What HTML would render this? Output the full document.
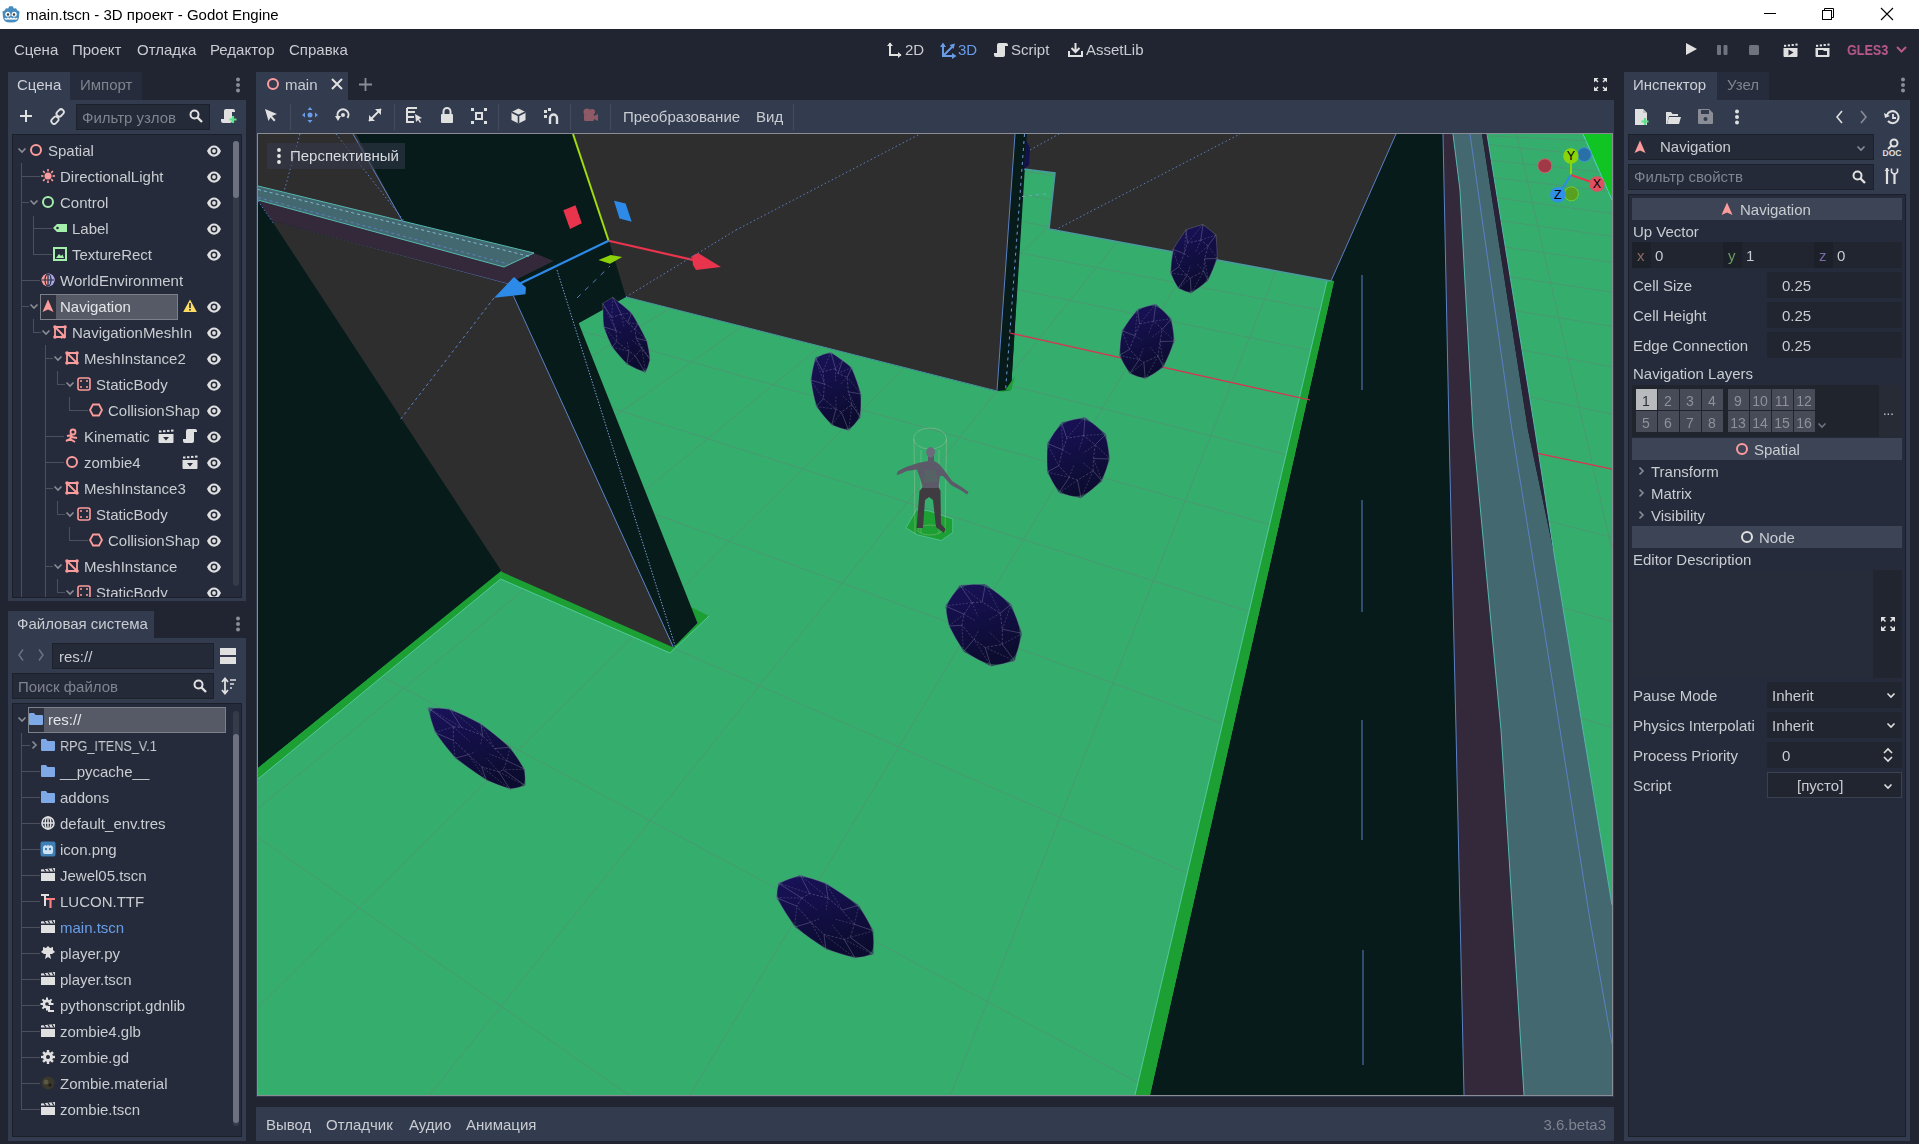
<!DOCTYPE html>
<html><head><meta charset="utf-8">
<style>
*{margin:0;padding:0;box-sizing:border-box}
html,body{width:1920px;height:1144px;overflow:hidden;background:#fff}
body{position:relative;font-family:"Liberation Sans",sans-serif;font-size:15px;color:#c9ccd1}
.a{position:absolute}
.t{position:absolute;white-space:nowrap;-webkit-font-smoothing:antialiased;will-change:transform}
svg{position:absolute;overflow:visible}
</style></head><body>
<div class="a" style="left:0px;top:0px;width:1920px;height:29px;background:#fff;"></div>
<svg style="left:2px;top:5px" width="18" height="18" viewBox="0 0 18 18"><path d="M4 3.2 L6.2 3.6 L7.2 1.2 L10.8 1.2 L11.8 3.6 L14 3.2 L15.2 5.2 L17.5 6.5 L17 12 Q17 17.5 9 17.5 Q1 17.5 1 12 L0.5 6.5 L2.8 5.2Z" fill="#478cbf"/><circle cx="5.8" cy="9.3" r="2.5" fill="#fff"/><circle cx="12.2" cy="9.3" r="2.5" fill="#fff"/><circle cx="6" cy="9.5" r="1.2" fill="#414042"/><circle cx="12" cy="9.5" r="1.2" fill="#414042"/><rect x="8.3" y="9" width="1.4" height="2" fill="#a8cbe8"/><path d="M2.8 13.2 Q4.4 15.2 6 13.2 Q7.5 15.2 9 13.2 Q10.5 15.2 12 13.2 Q13.6 15.2 15.2 13.2" stroke="#fff" stroke-width="1.3" fill="none"/></svg>
<div class="t" style="left:26px;top:2.0px;height:26px;line-height:26px;color:#000;">main.tscn - 3D проект - Godot Engine</div>
<svg style="left:1764px;top:13px" width="12" height="2" viewBox="0 0 12 2"><rect width="12" height="1" fill="#000"/></svg>
<svg style="left:1821px;top:7px" width="14" height="14" viewBox="0 0 14 14"><path d="M3.5 3.5 V1.5 H12.5 V10.5 H10.5" stroke="#000" fill="none"/><rect x="1.5" y="3.5" width="9" height="9" stroke="#000" fill="none"/></svg>
<svg style="left:1880px;top:7px" width="14" height="14" viewBox="0 0 14 14"><path d="M1 1 L13 13 M13 1 L1 13" stroke="#000" stroke-width="1.1"/></svg>
<div class="a" style="left:0px;top:29px;width:1919px;height:1115px;background:#202531;"></div>
<div class="t" style="left:14px;top:37.0px;height:26px;line-height:26px;">Сцена</div>
<div class="t" style="left:72px;top:37.0px;height:26px;line-height:26px;">Проект</div>
<div class="t" style="left:137px;top:37.0px;height:26px;line-height:26px;">Отладка</div>
<div class="t" style="left:210px;top:37.0px;height:26px;line-height:26px;">Редактор</div>
<div class="t" style="left:289px;top:37.0px;height:26px;line-height:26px;">Справка</div>
<svg style="left:887px;top:42px" width="16" height="16" viewBox="0 0 16 16"><path d="M3 1 V13 H14" stroke="#e0e0e0" stroke-width="2" fill="none"/><path d="M0 4 L3 0.5 L6 4Z M11 10 L14.5 13 L11 16Z" fill="#e0e0e0"/></svg>
<div class="t" style="left:905px;top:37.0px;height:26px;line-height:26px;">2D</div>
<svg style="left:940px;top:42px" width="17" height="16" viewBox="0 0 17 16"><path d="M3 4 V14 H13 M3 14 L13 4" stroke="#699ce8" stroke-width="2" fill="none"/><path d="M0 5 L3 0.5 L6 5Z M12 11 L16.5 14 L12 17Z M9.5 3 L15 1.5 L13.5 7Z" fill="#699ce8"/></svg>
<div class="t" style="left:958px;top:37.0px;height:26px;line-height:26px;color:#699ce8;">3D</div>
<svg style="left:994px;top:42px" width="14" height="15" viewBox="0 0 14 15"><path d="M4 1 H12 Q14 1 14 3 V4 H11 V13 Q11 15 9 15 H2 Q0 15 0 13 V11 H3 V3 Q3 1 5 1Z" fill="#e0e0e0"/></svg>
<div class="t" style="left:1011px;top:37.0px;height:26px;line-height:26px;">Script</div>
<svg style="left:1068px;top:42px" width="15" height="15" viewBox="0 0 15 15"><path d="M7.5 1 V10 M3.5 6 L7.5 10 L11.5 6" stroke="#e0e0e0" stroke-width="2" fill="none"/><path d="M1 9 V14 H14 V9" stroke="#e0e0e0" stroke-width="2" fill="none"/></svg>
<div class="t" style="left:1086px;top:37.0px;height:26px;line-height:26px;">AssetLib</div>
<svg style="left:1684px;top:42px" width="14" height="14" viewBox="0 0 14 14"><path d="M2 1 L13 7 L2 13Z" fill="#e0e0e0"/></svg>
<svg style="left:1717px;top:45px" width="12" height="12" viewBox="0 0 12 12"><rect x="0" y="0" width="4" height="10" rx="1" fill="#6f737d"/><rect x="6.5" y="0" width="4" height="10" rx="1" fill="#6f737d"/></svg>
<svg style="left:1749px;top:45px" width="11" height="11" viewBox="0 0 11 11"><rect x="0" y="0" width="10" height="10" rx="1.5" fill="#6f737d"/></svg>
<svg style="left:1783px;top:43px" width="15" height="14" viewBox="0 0 15 14"><path d="M0.5 5 H14.5 V13 Q14.5 14 13.5 14 H1.5 Q0.5 14 0.5 13Z" fill="#e0e0e0"/><rect x="1" y="1.8" width="2.2" height="2" fill="#e0e0e0"/><rect x="4.8" y="1.4" width="2.2" height="2" fill="#e0e0e0"/><rect x="8.6" y="1" width="2.2" height="2" fill="#e0e0e0"/><rect x="12.4" y="0.6" width="2.2" height="2" fill="#e0e0e0"/><path d="M5.5 6.5 L10.5 9.5 L5.5 12.5Z" fill="#202531"/></svg>
<svg style="left:1815px;top:43px" width="15" height="14" viewBox="0 0 15 14"><path d="M0.5 5 H14.5 V13 Q14.5 14 13.5 14 H1.5 Q0.5 14 0.5 13Z" fill="#e0e0e0"/><rect x="1" y="1.8" width="2.2" height="2" fill="#e0e0e0"/><rect x="4.8" y="1.4" width="2.2" height="2" fill="#e0e0e0"/><rect x="8.6" y="1" width="2.2" height="2" fill="#e0e0e0"/><rect x="12.4" y="0.6" width="2.2" height="2" fill="#e0e0e0"/><path d="M3 7 H8 L9 8 H12 V12 H3Z" fill="#202531"/></svg>
<div class="t" style="left:1847px;top:37.0px;height:26px;line-height:26px;color:#b8598a;font-size:14.5px;transform:scaleX(0.867);transform-origin:0 0"><b>GLES3</b></div>
<svg style="left:1896px;top:46px" width="11" height="7" viewBox="0 0 11 7"><path d="M1 1 L5.5 5.5 L10 1" stroke="#b8598a" stroke-width="2" fill="none"/></svg>
<div class="a" style="left:8px;top:72px;width:62px;height:28px;background:#333b4f;"></div>
<div class="t" style="left:17px;top:72.0px;height:26px;line-height:26px;color:#cdd0d5;">Сцена</div>
<div class="a" style="left:70px;top:72px;width:72px;height:28px;background:#262c3b;"></div>
<div class="t" style="left:80px;top:72.0px;height:26px;line-height:26px;color:#80848f;">Импорт</div>
<svg style="left:236px;top:77px" width="4" height="16" viewBox="0 0 4 16"><circle cx="2" cy="2.5" r="2" fill="#8a8d96"/><circle cx="2" cy="8" r="2" fill="#8a8d96"/><circle cx="2" cy="13.5" r="2" fill="#8a8d96"/></svg>
<div class="a" style="left:8px;top:100px;width:238px;height:501px;background:#333b4f;"></div>
<svg style="left:19px;top:109px" width="14" height="14" viewBox="0 0 14 14"><path d="M7 1 V13 M1 7 H13" stroke="#e0e0e0" stroke-width="2"/></svg>
<svg style="left:51px;top:110px" width="13" height="13" viewBox="0 0 13 13"><path d="M5.5 7.5 L7.5 5.5" stroke="#e0e0e0" stroke-width="2"/><rect x="1.2" y="6.2" width="5.5" height="8" rx="2.7" transform="rotate(45 4 10.2)" stroke="#e0e0e0" stroke-width="1.8" fill="none"/><rect x="6.3" y="-1.2" width="5.5" height="8" rx="2.7" transform="rotate(45 9 3)" stroke="#e0e0e0" stroke-width="1.8" fill="none"/></svg>
<div class="a" style="left:76px;top:104px;width:134px;height:26px;background:#252a38;border:1px solid #1d212b"></div>
<div class="t" style="left:82px;top:105.0px;height:26px;line-height:26px;color:#80848f;">Фильтр узлов</div>
<svg style="left:189px;top:109px" width="14" height="14" viewBox="0 0 14 14"><circle cx="5.5" cy="5.5" r="4" stroke="#e0e0e0" stroke-width="2" fill="none"/><path d="M8.5 8.5 L13 13" stroke="#e0e0e0" stroke-width="2.4"/></svg>
<svg style="left:221px;top:108px" width="16" height="16" viewBox="0 0 16 16"><path d="M4 1 H12 Q14 1 14 3 V4 H11 V13 Q11 15 9 15 H2 Q0 15 0 13 V11 H3 V3 Q3 1 5 1Z" fill="#e0e0e0"/><path d="M12 8 V15 M8.5 11.5 H15.5" stroke="#5fe08a" stroke-width="2.2"/></svg>
<div class="a" style="left:12px;top:134px;width:230px;height:464px;background:#252b3a;border:1px solid #1b1f29"></div>
<div class="a" style="left:233px;top:141px;width:6px;height:445px;background:#363b49;border-radius:3px"></div>
<div class="a" style="left:233px;top:141px;width:6px;height:57px;background:#6e7280;border-radius:3px"></div>
<div class="a" style="left:13px;top:135px;width:219px;height:462px;overflow:hidden">
<div class="a" style="left:8px;top:28px;width:1px;height:435px;background:#4b505c;"></div>
<div class="a" style="left:20px;top:81px;width:1px;height:39px;background:#4b505c;"></div>
<div class="a" style="left:20px;top:184px;width:1px;height:14px;background:#4b505c;"></div>
<div class="a" style="left:32px;top:210px;width:1px;height:253px;background:#4b505c;"></div>
<div class="a" style="left:44px;top:236px;width:1px;height:14px;background:#4b505c;"></div>
<div class="a" style="left:56px;top:262px;width:1px;height:14px;background:#4b505c;"></div>
<div class="a" style="left:44px;top:366px;width:1px;height:14px;background:#4b505c;"></div>
<div class="a" style="left:56px;top:392px;width:1px;height:14px;background:#4b505c;"></div>
<div class="a" style="left:44px;top:444px;width:1px;height:14px;background:#4b505c;"></div>
<div class="a" style="left:8px;top:41px;width:19px;height:1px;background:#4b505c;"></div>
<div class="a" style="left:8px;top:67px;width:8px;height:1px;background:#4b505c;"></div>
<div class="a" style="left:20px;top:93px;width:19px;height:1px;background:#4b505c;"></div>
<div class="a" style="left:20px;top:119px;width:19px;height:1px;background:#4b505c;"></div>
<div class="a" style="left:8px;top:145px;width:19px;height:1px;background:#4b505c;"></div>
<div class="a" style="left:8px;top:171px;width:8px;height:1px;background:#4b505c;"></div>
<div class="a" style="left:27px;top:159px;width:138px;height:26px;background:#555a66;border:1px solid #7b808b"></div>
<div class="a" style="left:28px;top:160px;width:15px;height:24px;background:#2b303c;"></div>
<div class="a" style="left:20px;top:197px;width:8px;height:1px;background:#4b505c;"></div>
<div class="a" style="left:32px;top:223px;width:8px;height:1px;background:#4b505c;"></div>
<div class="a" style="left:44px;top:249px;width:8px;height:1px;background:#4b505c;"></div>
<div class="a" style="left:56px;top:275px;width:19px;height:1px;background:#4b505c;"></div>
<div class="a" style="left:32px;top:301px;width:19px;height:1px;background:#4b505c;"></div>
<div class="a" style="left:32px;top:327px;width:19px;height:1px;background:#4b505c;"></div>
<div class="a" style="left:32px;top:353px;width:8px;height:1px;background:#4b505c;"></div>
<div class="a" style="left:44px;top:379px;width:8px;height:1px;background:#4b505c;"></div>
<div class="a" style="left:56px;top:405px;width:19px;height:1px;background:#4b505c;"></div>
<div class="a" style="left:32px;top:431px;width:8px;height:1px;background:#4b505c;"></div>
<div class="a" style="left:44px;top:457px;width:8px;height:1px;background:#4b505c;"></div>
</div>
<div class="a" style="left:13px;top:135px;width:219px;height:462px;overflow:hidden">
<svg style="left:5px;top:12.5px" width="8" height="5" viewBox="0 0 8 5"><path d="M0.5 0.5 L4 4 L7.5 0.5" stroke="#8a8d96" stroke-width="1.6" fill="none"/></svg>
<svg style="left:17px;top:9px" width="12" height="12" viewBox="0 0 12 12"><circle cx="6" cy="6" r="5" stroke="#fc9c9c" stroke-width="2" fill="none"/></svg>
<div class="t" style="left:35px;top:3.0px;height:26px;line-height:26px;">Spatial</div>
<svg style="left:194px;top:10px" width="14" height="12" viewBox="0 0 14 12"><path d="M0 6 C3 -1.5 11 -1.5 14 6 C11 13.5 3 13.5 0 6Z" fill="#e0e0e0"/><circle cx="7" cy="6" r="3.4" fill="#252b3a"/><circle cx="7" cy="6" r="1.9" fill="#e0e0e0"/></svg>
<svg style="left:28px;top:34px" width="14" height="14" viewBox="0 0 14 14"><circle cx="7" cy="7" r="3.5" fill="#fc9c9c"/><rect x="6.2" y="0" width="1.6" height="2.5" fill="#fc9c9c" transform="rotate(0 7 7)"/><rect x="6.2" y="0" width="1.6" height="2.5" fill="#fc9c9c" transform="rotate(45 7 7)"/><rect x="6.2" y="0" width="1.6" height="2.5" fill="#fc9c9c" transform="rotate(90 7 7)"/><rect x="6.2" y="0" width="1.6" height="2.5" fill="#fc9c9c" transform="rotate(135 7 7)"/><rect x="6.2" y="0" width="1.6" height="2.5" fill="#fc9c9c" transform="rotate(180 7 7)"/><rect x="6.2" y="0" width="1.6" height="2.5" fill="#fc9c9c" transform="rotate(225 7 7)"/><rect x="6.2" y="0" width="1.6" height="2.5" fill="#fc9c9c" transform="rotate(270 7 7)"/><rect x="6.2" y="0" width="1.6" height="2.5" fill="#fc9c9c" transform="rotate(315 7 7)"/></svg>
<div class="t" style="left:47px;top:29.0px;height:26px;line-height:26px;">DirectionalLight</div>
<svg style="left:194px;top:36px" width="14" height="12" viewBox="0 0 14 12"><path d="M0 6 C3 -1.5 11 -1.5 14 6 C11 13.5 3 13.5 0 6Z" fill="#e0e0e0"/><circle cx="7" cy="6" r="3.4" fill="#252b3a"/><circle cx="7" cy="6" r="1.9" fill="#e0e0e0"/></svg>
<svg style="left:17px;top:64.5px" width="8" height="5" viewBox="0 0 8 5"><path d="M0.5 0.5 L4 4 L7.5 0.5" stroke="#8a8d96" stroke-width="1.6" fill="none"/></svg>
<svg style="left:29px;top:61px" width="12" height="12" viewBox="0 0 12 12"><circle cx="6" cy="6" r="5" stroke="#a5efac" stroke-width="2" fill="none"/></svg>
<div class="t" style="left:47px;top:55.0px;height:26px;line-height:26px;">Control</div>
<svg style="left:194px;top:62px" width="14" height="12" viewBox="0 0 14 12"><path d="M0 6 C3 -1.5 11 -1.5 14 6 C11 13.5 3 13.5 0 6Z" fill="#e0e0e0"/><circle cx="7" cy="6" r="3.4" fill="#252b3a"/><circle cx="7" cy="6" r="1.9" fill="#e0e0e0"/></svg>
<svg style="left:40px;top:88px" width="14" height="10" viewBox="0 0 14 10"><path d="M0 5 L4 1 H14 V9 H4Z" fill="#a5efac"/><circle cx="4.5" cy="5" r="1.3" fill="#252b3a"/></svg>
<div class="t" style="left:59px;top:81.0px;height:26px;line-height:26px;">Label</div>
<svg style="left:194px;top:88px" width="14" height="12" viewBox="0 0 14 12"><path d="M0 6 C3 -1.5 11 -1.5 14 6 C11 13.5 3 13.5 0 6Z" fill="#e0e0e0"/><circle cx="7" cy="6" r="3.4" fill="#252b3a"/><circle cx="7" cy="6" r="1.9" fill="#e0e0e0"/></svg>
<svg style="left:40px;top:112px" width="14" height="14" viewBox="0 0 14 14"><rect x="1" y="1" width="12" height="12" stroke="#a5efac" stroke-width="2" fill="none"/><path d="M3 11 L6 7 L8 9 L9.5 7.5 L11 11Z" fill="#a5efac"/></svg>
<div class="t" style="left:59px;top:107.0px;height:26px;line-height:26px;">TextureRect</div>
<svg style="left:194px;top:114px" width="14" height="12" viewBox="0 0 14 12"><path d="M0 6 C3 -1.5 11 -1.5 14 6 C11 13.5 3 13.5 0 6Z" fill="#e0e0e0"/><circle cx="7" cy="6" r="3.4" fill="#252b3a"/><circle cx="7" cy="6" r="1.9" fill="#e0e0e0"/></svg>
<svg style="left:28px;top:138px" width="14" height="14" viewBox="0 0 14 14"><circle cx="7" cy="7" r="6.5" fill="#fc9c9c"/><path d="M7 0.5 A6.5 6.5 0 0 1 7 13.5Z" fill="#a8a8f0"/><path d="M7 1 V13 M1 7 H13" stroke="#252b3a" stroke-width="1.2"/><ellipse cx="7" cy="7" rx="3" ry="6" stroke="#252b3a" stroke-width="1.2" fill="none"/></svg>
<div class="t" style="left:47px;top:133.0px;height:26px;line-height:26px;">WorldEnvironment</div>
<svg style="left:17px;top:168.5px" width="8" height="5" viewBox="0 0 8 5"><path d="M0.5 0.5 L4 4 L7.5 0.5" stroke="#8a8d96" stroke-width="1.6" fill="none"/></svg>
<svg style="left:29px;top:164px" width="12" height="14" viewBox="0 0 12 14"><path d="M6 0.5 L11.5 13 L6 10.5 L0.5 13Z" fill="#fc9c9c"/></svg>
<div class="t" style="left:47px;top:159.0px;height:26px;line-height:26px;color:#e4e5e8;">Navigation</div>
<svg style="left:170px;top:164px" width="14" height="14" viewBox="0 0 14 14"><path d="M7 0.5 L13.8 13 H0.2Z" fill="#ffdd65"/><rect x="6.2" y="4" width="1.6" height="5" fill="#252b3a"/><rect x="6.2" y="10" width="1.6" height="1.6" fill="#252b3a"/></svg>
<svg style="left:194px;top:166px" width="14" height="12" viewBox="0 0 14 12"><path d="M0 6 C3 -1.5 11 -1.5 14 6 C11 13.5 3 13.5 0 6Z" fill="#e0e0e0"/><circle cx="7" cy="6" r="3.4" fill="#252b3a"/><circle cx="7" cy="6" r="1.9" fill="#e0e0e0"/></svg>
<svg style="left:29px;top:194.5px" width="8" height="5" viewBox="0 0 8 5"><path d="M0.5 0.5 L4 4 L7.5 0.5" stroke="#8a8d96" stroke-width="1.6" fill="none"/></svg>
<svg style="left:40px;top:190px" width="14" height="14" viewBox="0 0 14 14"><path d="M2 2 H12 V12 H2Z M2 2 L12 12" stroke="#fc9c9c" stroke-width="1.8" fill="none"/><circle cx="2" cy="2" r="1.8" fill="#fc9c9c"/><circle cx="12" cy="2" r="1.8" fill="#fc9c9c"/><circle cx="2" cy="12" r="1.8" fill="#fc9c9c"/><path d="M9 8 L12 14 L10 13 L8 14Z" fill="#fc9c9c"/></svg>
<div class="t" style="left:59px;top:185.0px;height:26px;line-height:26px;">NavigationMeshIn</div>
<svg style="left:194px;top:192px" width="14" height="12" viewBox="0 0 14 12"><path d="M0 6 C3 -1.5 11 -1.5 14 6 C11 13.5 3 13.5 0 6Z" fill="#e0e0e0"/><circle cx="7" cy="6" r="3.4" fill="#252b3a"/><circle cx="7" cy="6" r="1.9" fill="#e0e0e0"/></svg>
<svg style="left:41px;top:220.5px" width="8" height="5" viewBox="0 0 8 5"><path d="M0.5 0.5 L4 4 L7.5 0.5" stroke="#8a8d96" stroke-width="1.6" fill="none"/></svg>
<svg style="left:52px;top:216px" width="14" height="14" viewBox="0 0 14 14"><path d="M2 2 H12 V12 H2Z M2 2 L12 12" stroke="#fc9c9c" stroke-width="1.8" fill="none"/><circle cx="2" cy="2" r="1.8" fill="#fc9c9c"/><circle cx="12" cy="2" r="1.8" fill="#fc9c9c"/><circle cx="2" cy="12" r="1.8" fill="#fc9c9c"/><circle cx="12" cy="12" r="1.8" fill="#fc9c9c"/></svg>
<div class="t" style="left:71px;top:211.0px;height:26px;line-height:26px;">MeshInstance2</div>
<svg style="left:194px;top:218px" width="14" height="12" viewBox="0 0 14 12"><path d="M0 6 C3 -1.5 11 -1.5 14 6 C11 13.5 3 13.5 0 6Z" fill="#e0e0e0"/><circle cx="7" cy="6" r="3.4" fill="#252b3a"/><circle cx="7" cy="6" r="1.9" fill="#e0e0e0"/></svg>
<svg style="left:53px;top:246.5px" width="8" height="5" viewBox="0 0 8 5"><path d="M0.5 0.5 L4 4 L7.5 0.5" stroke="#8a8d96" stroke-width="1.6" fill="none"/></svg>
<svg style="left:64px;top:242px" width="14" height="14" viewBox="0 0 14 14"><rect x="1" y="1" width="12" height="12" rx="2" stroke="#fc9c9c" stroke-width="1.6" fill="none"/><circle cx="4" cy="4" r="1" fill="#fc9c9c"/><circle cx="10" cy="4" r="1" fill="#fc9c9c"/><circle cx="4" cy="10" r="1" fill="#fc9c9c"/><circle cx="10" cy="10" r="1" fill="#fc9c9c"/></svg>
<div class="t" style="left:83px;top:237.0px;height:26px;line-height:26px;">StaticBody</div>
<svg style="left:194px;top:244px" width="14" height="12" viewBox="0 0 14 12"><path d="M0 6 C3 -1.5 11 -1.5 14 6 C11 13.5 3 13.5 0 6Z" fill="#e0e0e0"/><circle cx="7" cy="6" r="3.4" fill="#252b3a"/><circle cx="7" cy="6" r="1.9" fill="#e0e0e0"/></svg>
<svg style="left:76px;top:268px" width="14" height="14" viewBox="0 0 14 14"><path d="M4 1.5 H10 L13 7 L10 12.5 H4 L1 7Z" stroke="#fc9c9c" stroke-width="1.8" fill="none"/></svg>
<div class="t" style="left:95px;top:263.0px;height:26px;line-height:26px;">CollisionShap</div>
<svg style="left:194px;top:270px" width="14" height="12" viewBox="0 0 14 12"><path d="M0 6 C3 -1.5 11 -1.5 14 6 C11 13.5 3 13.5 0 6Z" fill="#e0e0e0"/><circle cx="7" cy="6" r="3.4" fill="#252b3a"/><circle cx="7" cy="6" r="1.9" fill="#e0e0e0"/></svg>
<svg style="left:52px;top:294px" width="14" height="14" viewBox="0 0 14 14"><circle cx="8" cy="3" r="2.5" stroke="#fc9c9c" stroke-width="1.8" fill="none"/><path d="M7 6 L5 10 L1 12 M5 10 L10 13 M6 8 L12 9 M2 7 L7 6" stroke="#fc9c9c" stroke-width="2" fill="none"/></svg>
<div class="t" style="left:71px;top:289.0px;height:26px;line-height:26px;">Kinematic</div>
<svg style="left:145px;top:294px" width="16" height="14" viewBox="0 0 16 14"><path d="M0.5 5 H15.5 V13 Q15.5 14 14.5 14 H1.5 Q0.5 14 0.5 13Z" fill="#e0e0e0"/><rect x="1" y="1.5" width="2.5" height="2" fill="#e0e0e0"/><rect x="5" y="1.2" width="2.5" height="2" fill="#e0e0e0"/><rect x="9" y="0.9" width="2.5" height="2" fill="#e0e0e0"/><rect x="13" y="0.6" width="2.5" height="2" fill="#e0e0e0"/><path d="M5 8 H11 L8 11.5Z" fill="#252b3a"/></svg>
<svg style="left:170px;top:294px" width="14" height="14" viewBox="0 0 14 14"><path d="M4 0 H12 Q14 0 14 2 V3 H11 V12 Q11 14 9 14 H2 Q0 14 0 12 V10 H3 V2 Q3 0 5 0Z" fill="#e0e0e0"/></svg>
<svg style="left:194px;top:296px" width="14" height="12" viewBox="0 0 14 12"><path d="M0 6 C3 -1.5 11 -1.5 14 6 C11 13.5 3 13.5 0 6Z" fill="#e0e0e0"/><circle cx="7" cy="6" r="3.4" fill="#252b3a"/><circle cx="7" cy="6" r="1.9" fill="#e0e0e0"/></svg>
<svg style="left:53px;top:321px" width="12" height="12" viewBox="0 0 12 12"><circle cx="6" cy="6" r="5" stroke="#fc9c9c" stroke-width="2" fill="none"/></svg>
<div class="t" style="left:71px;top:315.0px;height:26px;line-height:26px;">zombie4</div>
<svg style="left:169px;top:320px" width="16" height="14" viewBox="0 0 16 14"><path d="M0.5 5 H15.5 V13 Q15.5 14 14.5 14 H1.5 Q0.5 14 0.5 13Z" fill="#e0e0e0"/><rect x="1" y="1.5" width="2.5" height="2" fill="#e0e0e0"/><rect x="5" y="1.2" width="2.5" height="2" fill="#e0e0e0"/><rect x="9" y="0.9" width="2.5" height="2" fill="#e0e0e0"/><rect x="13" y="0.6" width="2.5" height="2" fill="#e0e0e0"/><path d="M5 8 H11 L8 11.5Z" fill="#252b3a"/></svg>
<svg style="left:194px;top:322px" width="14" height="12" viewBox="0 0 14 12"><path d="M0 6 C3 -1.5 11 -1.5 14 6 C11 13.5 3 13.5 0 6Z" fill="#e0e0e0"/><circle cx="7" cy="6" r="3.4" fill="#252b3a"/><circle cx="7" cy="6" r="1.9" fill="#e0e0e0"/></svg>
<svg style="left:41px;top:350.5px" width="8" height="5" viewBox="0 0 8 5"><path d="M0.5 0.5 L4 4 L7.5 0.5" stroke="#8a8d96" stroke-width="1.6" fill="none"/></svg>
<svg style="left:52px;top:346px" width="14" height="14" viewBox="0 0 14 14"><path d="M2 2 H12 V12 H2Z M2 2 L12 12" stroke="#fc9c9c" stroke-width="1.8" fill="none"/><circle cx="2" cy="2" r="1.8" fill="#fc9c9c"/><circle cx="12" cy="2" r="1.8" fill="#fc9c9c"/><circle cx="2" cy="12" r="1.8" fill="#fc9c9c"/><circle cx="12" cy="12" r="1.8" fill="#fc9c9c"/></svg>
<div class="t" style="left:71px;top:341.0px;height:26px;line-height:26px;">MeshInstance3</div>
<svg style="left:194px;top:348px" width="14" height="12" viewBox="0 0 14 12"><path d="M0 6 C3 -1.5 11 -1.5 14 6 C11 13.5 3 13.5 0 6Z" fill="#e0e0e0"/><circle cx="7" cy="6" r="3.4" fill="#252b3a"/><circle cx="7" cy="6" r="1.9" fill="#e0e0e0"/></svg>
<svg style="left:53px;top:376.5px" width="8" height="5" viewBox="0 0 8 5"><path d="M0.5 0.5 L4 4 L7.5 0.5" stroke="#8a8d96" stroke-width="1.6" fill="none"/></svg>
<svg style="left:64px;top:372px" width="14" height="14" viewBox="0 0 14 14"><rect x="1" y="1" width="12" height="12" rx="2" stroke="#fc9c9c" stroke-width="1.6" fill="none"/><circle cx="4" cy="4" r="1" fill="#fc9c9c"/><circle cx="10" cy="4" r="1" fill="#fc9c9c"/><circle cx="4" cy="10" r="1" fill="#fc9c9c"/><circle cx="10" cy="10" r="1" fill="#fc9c9c"/></svg>
<div class="t" style="left:83px;top:367.0px;height:26px;line-height:26px;">StaticBody</div>
<svg style="left:194px;top:374px" width="14" height="12" viewBox="0 0 14 12"><path d="M0 6 C3 -1.5 11 -1.5 14 6 C11 13.5 3 13.5 0 6Z" fill="#e0e0e0"/><circle cx="7" cy="6" r="3.4" fill="#252b3a"/><circle cx="7" cy="6" r="1.9" fill="#e0e0e0"/></svg>
<svg style="left:76px;top:398px" width="14" height="14" viewBox="0 0 14 14"><path d="M4 1.5 H10 L13 7 L10 12.5 H4 L1 7Z" stroke="#fc9c9c" stroke-width="1.8" fill="none"/></svg>
<div class="t" style="left:95px;top:393.0px;height:26px;line-height:26px;">CollisionShap</div>
<svg style="left:194px;top:400px" width="14" height="12" viewBox="0 0 14 12"><path d="M0 6 C3 -1.5 11 -1.5 14 6 C11 13.5 3 13.5 0 6Z" fill="#e0e0e0"/><circle cx="7" cy="6" r="3.4" fill="#252b3a"/><circle cx="7" cy="6" r="1.9" fill="#e0e0e0"/></svg>
<svg style="left:41px;top:428.5px" width="8" height="5" viewBox="0 0 8 5"><path d="M0.5 0.5 L4 4 L7.5 0.5" stroke="#8a8d96" stroke-width="1.6" fill="none"/></svg>
<svg style="left:52px;top:424px" width="14" height="14" viewBox="0 0 14 14"><path d="M2 2 H12 V12 H2Z M2 2 L12 12" stroke="#fc9c9c" stroke-width="1.8" fill="none"/><circle cx="2" cy="2" r="1.8" fill="#fc9c9c"/><circle cx="12" cy="2" r="1.8" fill="#fc9c9c"/><circle cx="2" cy="12" r="1.8" fill="#fc9c9c"/><circle cx="12" cy="12" r="1.8" fill="#fc9c9c"/></svg>
<div class="t" style="left:71px;top:419.0px;height:26px;line-height:26px;">MeshInstance</div>
<svg style="left:194px;top:426px" width="14" height="12" viewBox="0 0 14 12"><path d="M0 6 C3 -1.5 11 -1.5 14 6 C11 13.5 3 13.5 0 6Z" fill="#e0e0e0"/><circle cx="7" cy="6" r="3.4" fill="#252b3a"/><circle cx="7" cy="6" r="1.9" fill="#e0e0e0"/></svg>
<svg style="left:53px;top:454.5px" width="8" height="5" viewBox="0 0 8 5"><path d="M0.5 0.5 L4 4 L7.5 0.5" stroke="#8a8d96" stroke-width="1.6" fill="none"/></svg>
<svg style="left:64px;top:450px" width="14" height="14" viewBox="0 0 14 14"><rect x="1" y="1" width="12" height="12" rx="2" stroke="#fc9c9c" stroke-width="1.6" fill="none"/><circle cx="4" cy="4" r="1" fill="#fc9c9c"/><circle cx="10" cy="4" r="1" fill="#fc9c9c"/><circle cx="4" cy="10" r="1" fill="#fc9c9c"/><circle cx="10" cy="10" r="1" fill="#fc9c9c"/></svg>
<div class="t" style="left:83px;top:445.0px;height:26px;line-height:26px;">StaticBody</div>
<svg style="left:194px;top:452px" width="14" height="12" viewBox="0 0 14 12"><path d="M0 6 C3 -1.5 11 -1.5 14 6 C11 13.5 3 13.5 0 6Z" fill="#e0e0e0"/><circle cx="7" cy="6" r="3.4" fill="#252b3a"/><circle cx="7" cy="6" r="1.9" fill="#e0e0e0"/></svg>
</div>
<div class="a" style="left:8px;top:611px;width:146px;height:28px;background:#333b4f;"></div>
<div class="t" style="left:17px;top:611.0px;height:26px;line-height:26px;">Файловая система</div>
<svg style="left:236px;top:616px" width="4" height="16" viewBox="0 0 4 16"><circle cx="2" cy="2.5" r="2" fill="#8a8d96"/><circle cx="2" cy="8" r="2" fill="#8a8d96"/><circle cx="2" cy="13.5" r="2" fill="#8a8d96"/></svg>
<div class="a" style="left:8px;top:638px;width:238px;height:503px;background:#333b4f;"></div>
<svg style="left:18px;top:649px" width="6" height="12" viewBox="0 0 6 12"><path d="M5 0.5 L1 6 L5 11.5" stroke="#6e7280" stroke-width="1.5" fill="none"/></svg>
<svg style="left:38px;top:649px" width="6" height="12" viewBox="0 0 6 12"><path d="M1 0.5 L5 6 L1 11.5" stroke="#6e7280" stroke-width="1.5" fill="none"/></svg>
<div class="a" style="left:52px;top:643px;width:162px;height:26px;background:#252a38;border:1px solid #1d212b"></div>
<div class="t" style="left:59px;top:644.0px;height:26px;line-height:26px;">res://</div>
<svg style="left:220px;top:648px" width="16" height="16" viewBox="0 0 16 16"><rect x="0" y="0" width="16" height="7" fill="#e0e0e0"/><rect x="0" y="9" width="16" height="7" fill="#e0e0e0"/></svg>
<div class="a" style="left:12px;top:673px;width:202px;height:26px;background:#252a38;border:1px solid #1d212b"></div>
<div class="t" style="left:18px;top:674.0px;height:26px;line-height:26px;color:#80848f;">Поиск файлов</div>
<svg style="left:193px;top:679px" width="14" height="14" viewBox="0 0 14 14"><circle cx="5.5" cy="5.5" r="4" stroke="#e0e0e0" stroke-width="2" fill="none"/><path d="M8.5 8.5 L13 13" stroke="#e0e0e0" stroke-width="2.4"/></svg>
<svg style="left:221px;top:678px" width="16" height="16" viewBox="0 0 16 16"><path d="M4 1 V15 M1 4 L4 0.5 L7 4 M1 12 L4 15.5 L7 12" stroke="#e0e0e0" stroke-width="1.8" fill="none"/><path d="M9 2 H15 M9 6 H13 M9 10 H11" stroke="#e0e0e0" stroke-width="1.6"/></svg>
<div class="a" style="left:12px;top:703px;width:230px;height:434px;background:#252b3a;border:1px solid #1b1f29"></div>
<div class="a" style="left:233px;top:711px;width:6px;height:415px;background:#363b49;border-radius:3px"></div>
<div class="a" style="left:233px;top:734px;width:6px;height:389px;background:#6e7280;border-radius:3px"></div>
<div class="a" style="left:28px;top:707px;width:198px;height:26px;background:#555a66;border:1px solid #7b808b"></div>
<div class="a" style="left:29px;top:708px;width:15px;height:24px;background:#2b303c;"></div>
<div class="a" style="left:21px;top:733px;width:1px;height:377px;background:#4b505c;"></div>
<svg style="left:18px;top:716.5px" width="8" height="5" viewBox="0 0 8 5"><path d="M0.5 0.5 L4 4 L7.5 0.5" stroke="#8a8d96" stroke-width="1.6" fill="none"/></svg>
<svg style="left:29px;top:713px" width="14" height="12" viewBox="0 0 14 12"><path d="M0 1 Q0 0 1 0 H5 L6.5 2 H13 Q14 2 14 3 V11 Q14 12 13 12 H1 Q0 12 0 11Z" fill="#7fa9e6"/></svg>
<div class="t" style="left:48px;top:707.0px;height:26px;line-height:26px;color:#e4e5e8;">res://</div>
<div class="a" style="left:22px;top:745px;width:8px;height:1px;background:#4b505c;"></div>
<svg style="left:31.5px;top:741px" width="5" height="8" viewBox="0 0 5 8"><path d="M0.5 0.5 L4 4 L0.5 7.5" stroke="#8a8d96" stroke-width="1.6" fill="none"/></svg>
<svg style="left:41px;top:739px" width="14" height="12" viewBox="0 0 14 12"><path d="M0 1 Q0 0 1 0 H5 L6.5 2 H13 Q14 2 14 3 V11 Q14 12 13 12 H1 Q0 12 0 11Z" fill="#7fa9e6"/></svg>
<div class="t" style="left:60px;top:733.0px;height:26px;line-height:26px;transform:scaleX(0.845);transform-origin:0 0">RPG_ITENS_V.1</div>
<div class="a" style="left:22px;top:771px;width:18px;height:1px;background:#4b505c;"></div>
<svg style="left:41px;top:765px" width="14" height="12" viewBox="0 0 14 12"><path d="M0 1 Q0 0 1 0 H5 L6.5 2 H13 Q14 2 14 3 V11 Q14 12 13 12 H1 Q0 12 0 11Z" fill="#7fa9e6"/></svg>
<div class="t" style="left:60px;top:759.0px;height:26px;line-height:26px;">__pycache__</div>
<div class="a" style="left:22px;top:797px;width:18px;height:1px;background:#4b505c;"></div>
<svg style="left:41px;top:791px" width="14" height="12" viewBox="0 0 14 12"><path d="M0 1 Q0 0 1 0 H5 L6.5 2 H13 Q14 2 14 3 V11 Q14 12 13 12 H1 Q0 12 0 11Z" fill="#7fa9e6"/></svg>
<div class="t" style="left:60px;top:785.0px;height:26px;line-height:26px;">addons</div>
<div class="a" style="left:22px;top:823px;width:18px;height:1px;background:#4b505c;"></div>
<svg style="left:41px;top:816px" width="14" height="14" viewBox="0 0 14 14"><circle cx="7" cy="7" r="6" stroke="#e0e0e0" stroke-width="1.6" fill="none"/><path d="M7 1 V13 M1 7 H13" stroke="#e0e0e0" stroke-width="1.4"/><ellipse cx="7" cy="7" rx="2.8" ry="6" stroke="#e0e0e0" stroke-width="1.4" fill="none"/></svg>
<div class="t" style="left:60px;top:811.0px;height:26px;line-height:26px;">default_env.tres</div>
<div class="a" style="left:22px;top:849px;width:18px;height:1px;background:#4b505c;"></div>
<svg style="left:40px;top:841px" width="16" height="16" viewBox="0 0 16 16"><rect x="0.5" y="0.5" width="15" height="15" rx="2" fill="#3e7fb6"/><path d="M3 6 L5 4 L7 5 L8 3.5 L9 5 L11 4 L13 6 V11 Q13 13 11 13 H5 Q3 13 3 11Z" fill="#cfe3f5"/><circle cx="6" cy="8" r="1.2" fill="#3e7fb6"/><circle cx="10" cy="8" r="1.2" fill="#3e7fb6"/></svg>
<div class="t" style="left:60px;top:837.0px;height:26px;line-height:26px;">icon.png</div>
<div class="a" style="left:22px;top:875px;width:18px;height:1px;background:#4b505c;"></div>
<svg style="left:41px;top:868px" width="14" height="14" viewBox="0 0 14 14"><path d="M0 5 H14 V13 H0Z" fill="#e0e0e0"/><path d="M0 1.5 L14 0 V3.5 H0Z" fill="#e0e0e0"/><path d="M3 1.2 L5 3.5 M7 0.8 L9 3.5 M11 0.4 L13 3.5" stroke="#252b3a" stroke-width="1.2"/></svg>
<div class="t" style="left:60px;top:863.0px;height:26px;line-height:26px;">Jewel05.tscn</div>
<div class="a" style="left:22px;top:901px;width:18px;height:1px;background:#4b505c;"></div>
<svg style="left:41px;top:894px" width="14" height="14" viewBox="0 0 14 14"><path d="M0 1 H8 M4 1 V12" stroke="#e0e0e0" stroke-width="2"/><path d="M5 5 H14 M9.5 5 V14" stroke="#fc7f7f" stroke-width="2.2"/></svg>
<div class="t" style="left:60px;top:889.0px;height:26px;line-height:26px;">LUCON.TTF</div>
<div class="a" style="left:22px;top:927px;width:18px;height:1px;background:#4b505c;"></div>
<svg style="left:41px;top:920px" width="14" height="14" viewBox="0 0 14 14"><path d="M0 5 H14 V13 H0Z" fill="#e0e0e0"/><path d="M0 1.5 L14 0 V3.5 H0Z" fill="#e0e0e0"/><path d="M3 1.2 L5 3.5 M7 0.8 L9 3.5 M11 0.4 L13 3.5" stroke="#252b3a" stroke-width="1.2"/></svg>
<div class="t" style="left:60px;top:915.0px;height:26px;line-height:26px;color:#6a9ee8;">main.tscn</div>
<div class="a" style="left:22px;top:953px;width:18px;height:1px;background:#4b505c;"></div>
<svg style="left:41px;top:946px" width="14" height="14" viewBox="0 0 14 14"><path d="M7 0 L9 2 L12 1 L12 4 L14 6 L11 8 L9 8 L10 13 L7 11 L4 13 L5 8 L3 8 L0 6 L2 4 L2 1 L5 2Z" fill="#e0e0e0"/></svg>
<div class="t" style="left:60px;top:941.0px;height:26px;line-height:26px;">player.py</div>
<div class="a" style="left:22px;top:979px;width:18px;height:1px;background:#4b505c;"></div>
<svg style="left:41px;top:972px" width="14" height="14" viewBox="0 0 14 14"><path d="M0 5 H14 V13 H0Z" fill="#e0e0e0"/><path d="M0 1.5 L14 0 V3.5 H0Z" fill="#e0e0e0"/><path d="M3 1.2 L5 3.5 M7 0.8 L9 3.5 M11 0.4 L13 3.5" stroke="#252b3a" stroke-width="1.2"/></svg>
<div class="t" style="left:60px;top:967.0px;height:26px;line-height:26px;">player.tscn</div>
<div class="a" style="left:22px;top:1005px;width:18px;height:1px;background:#4b505c;"></div>
<svg style="left:41px;top:998px" width="14" height="14" viewBox="0 0 14 14"><circle cx="6" cy="6" r="4.5" fill="#e0e0e0"/><rect x="5" y="-0.5" width="2" height="3" fill="#e0e0e0" transform="rotate(0 6 6)"/><rect x="5" y="-0.5" width="2" height="3" fill="#e0e0e0" transform="rotate(45 6 6)"/><rect x="5" y="-0.5" width="2" height="3" fill="#e0e0e0" transform="rotate(90 6 6)"/><rect x="5" y="-0.5" width="2" height="3" fill="#e0e0e0" transform="rotate(135 6 6)"/><rect x="5" y="-0.5" width="2" height="3" fill="#e0e0e0" transform="rotate(180 6 6)"/><rect x="5" y="-0.5" width="2" height="3" fill="#e0e0e0" transform="rotate(225 6 6)"/><rect x="5" y="-0.5" width="2" height="3" fill="#e0e0e0" transform="rotate(270 6 6)"/><rect x="5" y="-0.5" width="2" height="3" fill="#e0e0e0" transform="rotate(315 6 6)"/><circle cx="6" cy="6" r="1.8" fill="#252b3a"/><path d="M7 7 H14 V14 H7Z" fill="#252b3a"/><path d="M8 8 V13 H13" stroke="#e0e0e0" stroke-width="2" fill="none"/></svg>
<div class="t" style="left:60px;top:993.0px;height:26px;line-height:26px;">pythonscript.gdnlib</div>
<div class="a" style="left:22px;top:1031px;width:18px;height:1px;background:#4b505c;"></div>
<svg style="left:41px;top:1024px" width="14" height="14" viewBox="0 0 14 14"><path d="M0 5 H14 V13 H0Z" fill="#e0e0e0"/><path d="M0 1.5 L14 0 V3.5 H0Z" fill="#e0e0e0"/><path d="M3 1.2 L5 3.5 M7 0.8 L9 3.5 M11 0.4 L13 3.5" stroke="#252b3a" stroke-width="1.2"/></svg>
<div class="t" style="left:60px;top:1019.0px;height:26px;line-height:26px;">zombie4.glb</div>
<div class="a" style="left:22px;top:1057px;width:18px;height:1px;background:#4b505c;"></div>
<svg style="left:41px;top:1050px" width="14" height="14" viewBox="0 0 14 14"><circle cx="7" cy="7" r="5" fill="#e0e0e0"/><rect x="5.8" y="0" width="2.4" height="3" fill="#e0e0e0" transform="rotate(0 7 7)"/><rect x="5.8" y="0" width="2.4" height="3" fill="#e0e0e0" transform="rotate(45 7 7)"/><rect x="5.8" y="0" width="2.4" height="3" fill="#e0e0e0" transform="rotate(90 7 7)"/><rect x="5.8" y="0" width="2.4" height="3" fill="#e0e0e0" transform="rotate(135 7 7)"/><rect x="5.8" y="0" width="2.4" height="3" fill="#e0e0e0" transform="rotate(180 7 7)"/><rect x="5.8" y="0" width="2.4" height="3" fill="#e0e0e0" transform="rotate(225 7 7)"/><rect x="5.8" y="0" width="2.4" height="3" fill="#e0e0e0" transform="rotate(270 7 7)"/><rect x="5.8" y="0" width="2.4" height="3" fill="#e0e0e0" transform="rotate(315 7 7)"/><circle cx="7" cy="7" r="2" fill="#252b3a"/></svg>
<div class="t" style="left:60px;top:1045.0px;height:26px;line-height:26px;">zombie.gd</div>
<div class="a" style="left:22px;top:1083px;width:18px;height:1px;background:#4b505c;"></div>
<svg style="left:41px;top:1076px" width="14" height="14" viewBox="0 0 14 14"><circle cx="7" cy="7" r="6.5" fill="#3a372c"/><circle cx="5" cy="6" r="2.5" fill="#5c5846"/><circle cx="9" cy="9" r="1.5" fill="#1c1a14"/></svg>
<div class="t" style="left:60px;top:1071.0px;height:26px;line-height:26px;">Zombie.material</div>
<div class="a" style="left:22px;top:1109px;width:18px;height:1px;background:#4b505c;"></div>
<svg style="left:41px;top:1102px" width="14" height="14" viewBox="0 0 14 14"><path d="M0 5 H14 V13 H0Z" fill="#e0e0e0"/><path d="M0 1.5 L14 0 V3.5 H0Z" fill="#e0e0e0"/><path d="M3 1.2 L5 3.5 M7 0.8 L9 3.5 M11 0.4 L13 3.5" stroke="#252b3a" stroke-width="1.2"/></svg>
<div class="t" style="left:60px;top:1097.0px;height:26px;line-height:26px;">zombie.tscn</div>
<div class="a" style="left:256px;top:72px;width:92px;height:28px;background:#333b4f;"></div>
<svg style="left:267px;top:78px" width="12" height="12" viewBox="0 0 12 12"><circle cx="6" cy="6" r="5" stroke="#fc9c9c" stroke-width="2" fill="none"/></svg>
<div class="t" style="left:285px;top:71.5px;height:26px;line-height:26px;">main</div>
<svg style="left:331px;top:78px" width="12" height="12" viewBox="0 0 12 12"><path d="M1 1 L11 11 M11 1 L1 11" stroke="#e0e0e0" stroke-width="2"/></svg>
<svg style="left:359px;top:78px" width="13" height="13" viewBox="0 0 13 13"><path d="M6.5 0 V13 M0 6.5 H13" stroke="#8a8d96" stroke-width="1.8"/></svg>
<svg style="left:1593px;top:77px" width="15" height="15" viewBox="0 0 15 15"><path d="M1 1 L5.5 1 L1 5.5Z M14 1 L9.5 1 L14 5.5Z M1 14 L5.5 14 L1 9.5Z M14 14 L9.5 14 L14 9.5Z" fill="#e0e0e0"/><path d="M2 2 L5 5 M13 2 L10 5 M2 13 L5 10 M13 13 L10 10" stroke="#e0e0e0" stroke-width="1.6"/></svg>
<div class="a" style="left:256px;top:100px;width:1358px;height:997px;background:#333b4f;"></div>
<svg style="left:264px;top:108px" width="14" height="14" viewBox="0 0 14 14"><path d="M1 1 L13 6 L8 8 L11.5 12 L10 13.5 L6.5 9.5 L4.5 13Z" fill="#e0e0e0"/></svg>
<div class="a" style="left:290px;top:104px;width:1px;height:26px;background:#454c5e;"></div>
<svg style="left:302px;top:107px" width="16" height="16" viewBox="0 0 16 16"><circle cx="8" cy="8" r="2.5" fill="#699ce8"/><path d="M8 0 L10.5 3 H5.5Z M8 16 L10.5 13 H5.5Z M0 8 L3 5.5 V10.5Z M16 8 L13 5.5 V10.5Z" fill="#699ce8"/></svg>
<svg style="left:335px;top:107px" width="16" height="16" viewBox="0 0 16 16"><path d="M3.5 11 A5.5 5.5 0 1 1 12.5 11" stroke="#e0e0e0" stroke-width="2" fill="none"/><path d="M0 9 L6 9 L3 14Z" fill="#e0e0e0"/><circle cx="8" cy="8" r="2" fill="#e0e0e0"/></svg>
<svg style="left:367px;top:107px" width="16" height="16" viewBox="0 0 16 16"><path d="M2 14 L14 2" stroke="#e0e0e0" stroke-width="2"/><path d="M8 2 H14 V8Z M2 8 V14 H8Z" fill="#e0e0e0"/></svg>
<div class="a" style="left:394px;top:104px;width:1px;height:26px;background:#454c5e;"></div>
<svg style="left:406px;top:107px" width="16" height="17" viewBox="0 0 16 17"><path d="M1 1 H11 M1 1 V15 H8 M1 5 H9 M1 10 H8" stroke="#e0e0e0" stroke-width="2" fill="none"/><path d="M9 7 L16 11 L13 12 L15 15 L14 16 L12 13 L10 15Z" fill="#e0e0e0"/></svg>
<svg style="left:440px;top:107px" width="14" height="16" viewBox="0 0 14 16"><path d="M3.5 7 V4.5 A3.5 3.5 0 0 1 10.5 4.5 V7" stroke="#e0e0e0" stroke-width="2" fill="none"/><rect x="1" y="7" width="12" height="9" rx="1" fill="#e0e0e0"/></svg>
<svg style="left:471px;top:108px" width="16" height="16" viewBox="0 0 16 16"><rect x="0" y="0" width="3" height="3" fill="#e0e0e0"/><rect x="13" y="0" width="3" height="3" fill="#e0e0e0"/><rect x="0" y="13" width="3" height="3" fill="#e0e0e0"/><rect x="13" y="13" width="3" height="3" fill="#e0e0e0"/><rect x="4" y="4" width="8" height="8" fill="#e0e0e0"/><rect x="6" y="6" width="4" height="4" fill="#333b4f"/></svg>
<div class="a" style="left:498px;top:104px;width:1px;height:26px;background:#454c5e;"></div>
<svg style="left:511px;top:108px" width="15" height="16" viewBox="0 0 15 16"><path d="M7.5 0.5 L14.5 4 V12 L7.5 15.5 L0.5 12 V4Z" fill="#e0e0e0"/><path d="M0.5 4 L7.5 7.5 L14.5 4 M7.5 7.5 V15.5" stroke="#333b4f" stroke-width="1.6" fill="none"/></svg>
<svg style="left:544px;top:108px" width="16" height="16" viewBox="0 0 16 16"><rect x="0" y="2" width="3" height="3" fill="#e0e0e0"/><rect x="4" y="0" width="3" height="3" fill="#e0e0e0"/><rect x="0" y="7" width="3" height="3" fill="#e0e0e0"/><path d="M6 16 V10 A3.5 3.5 0 0 1 13 10 V16" stroke="#e0e0e0" stroke-width="2.4" fill="none"/></svg>
<div class="a" style="left:570px;top:104px;width:1px;height:26px;background:#454c5e;"></div>
<svg style="left:582px;top:108px" width="16" height="15" viewBox="0 0 16 15"><circle cx="5" cy="4" r="3.5" fill="#8e5a66"/><circle cx="10" cy="4" r="3" fill="#8e5a66"/><rect x="2" y="6" width="10" height="7" rx="1.5" fill="#8e5a66"/><path d="M12 8 L16 6 V13 L12 11Z" fill="#8e5a66"/></svg>
<div class="a" style="left:610px;top:104px;width:1px;height:26px;background:#454c5e;"></div>
<div class="t" style="left:623px;top:104.0px;height:26px;line-height:26px;">Преобразование</div>
<div class="t" style="left:756px;top:104.0px;height:26px;line-height:26px;">Вид</div>
<div class="a" style="left:793px;top:104px;width:1px;height:26px;background:#454c5e;"></div>
<div class="a" style="left:257px;top:133px;width:1356px;height:963px;background:#8b8d96;"></div>
<div class="a" style="left:258px;top:134px;width:1354px;height:961px;overflow:hidden;background:#061b1a">
<svg style="left:0;top:0" width="1354" height="961" viewBox="258 134 1354 961"><defs><linearGradient id="rg" x1="0" y1="0" x2="0.3" y2="1"><stop offset="0" stop-color="#19125a"/><stop offset="1" stop-color="#0c0c30"/></linearGradient></defs><polygon points="258,768 501,572 579,323 626,297 996,391 1011,390 1024,169 1055,173 1049,229 1334,281 1150,1095 258,1095" fill="#35ad6d" /><clipPath id="fc"><polygon points="258,768 501,572 579,323 626,297 996,391 1011,390 1024,169 1055,173 1049,229 1334,281 1150,1095 258,1095" fill="#fff" /></clipPath><g clip-path="url(#fc)"><line x1="712.6" y1="41.4" x2="-1059.2" y2="553.1" stroke="#4a9a70" stroke-width="1" /><line x1="744.6" y1="44.9" x2="-1051.5" y2="596.0" stroke="#4a9a70" stroke-width="1" /><line x1="777.6" y1="48.5" x2="-1042.9" y2="644.2" stroke="#4a9a70" stroke-width="1" /><line x1="811.8" y1="52.2" x2="-1033.1" y2="699.1" stroke="#4a9a70" stroke-width="1" /><line x1="847.2" y1="56.1" x2="-1022.0" y2="761.8" stroke="#4a9a70" stroke-width="1" /><line x1="883.9" y1="60.1" x2="-1009.0" y2="834.5" stroke="#4a9a70" stroke-width="1" /><line x1="921.9" y1="64.3" x2="-993.9" y2="919.4" stroke="#4a9a70" stroke-width="1" /><line x1="961.4" y1="68.6" x2="-975.9" y2="1020.1" stroke="#4a9a70" stroke-width="1" /><line x1="1002.3" y1="73.0" x2="-954.3" y2="1141.3" stroke="#4a9a70" stroke-width="1" /><line x1="1044.9" y1="77.7" x2="-927.7" y2="1290.2" stroke="#4a9a70" stroke-width="1" /><line x1="1089.1" y1="82.5" x2="-894.3" y2="1477.4" stroke="#4a9a70" stroke-width="1" /><line x1="1135.1" y1="87.5" x2="-851.1" y2="1719.8" stroke="#4a9a70" stroke-width="1" /><line x1="1183.0" y1="92.8" x2="-792.9" y2="2046.0" stroke="#4a9a70" stroke-width="1" /><line x1="1233.0" y1="98.2" x2="-710.4" y2="2508.7" stroke="#4a9a70" stroke-width="1" /><line x1="1285.1" y1="103.9" x2="-584.2" y2="3216.1" stroke="#4a9a70" stroke-width="1" /><line x1="1339.4" y1="109.9" x2="-367.3" y2="4432.3" stroke="#4a9a70" stroke-width="1" /><line x1="1396.3" y1="116.1" x2="93.2" y2="7014.2" stroke="#4a9a70" stroke-width="1" /><line x1="1455.7" y1="122.6" x2="1732.9" y2="16207.7" stroke="#4a9a70" stroke-width="1" /><line x1="1517.9" y1="129.4" x2="-11603.6" y2="-58567.7" stroke="#4a9a70" stroke-width="1" /><line x1="1583.2" y1="136.5" x2="-3058.6" y2="-10657.3" stroke="#4a9a70" stroke-width="1" /><line x1="1651.7" y1="144.0" x2="-2215.3" y2="-5929.3" stroke="#4a9a70" stroke-width="1" /><line x1="712.6" y1="41.4" x2="1651.7" y2="144.0" stroke="#4a9a70" stroke-width="1" /><line x1="686.9" y1="48.8" x2="1662.3" y2="160.7" stroke="#4a9a70" stroke-width="1" /><line x1="659.4" y1="56.8" x2="1674.1" y2="179.2" stroke="#4a9a70" stroke-width="1" /><line x1="629.8" y1="65.3" x2="1687.3" y2="200.0" stroke="#4a9a70" stroke-width="1" /><line x1="598.0" y1="74.5" x2="1702.2" y2="223.3" stroke="#4a9a70" stroke-width="1" /><line x1="563.5" y1="84.5" x2="1719.1" y2="249.8" stroke="#4a9a70" stroke-width="1" /><line x1="526.1" y1="95.3" x2="1738.4" y2="280.2" stroke="#4a9a70" stroke-width="1" /><line x1="485.5" y1="107.0" x2="1760.7" y2="315.2" stroke="#4a9a70" stroke-width="1" /><line x1="441.1" y1="119.8" x2="1786.7" y2="356.1" stroke="#4a9a70" stroke-width="1" /><line x1="392.5" y1="133.9" x2="1817.5" y2="404.4" stroke="#4a9a70" stroke-width="1" /><line x1="338.9" y1="149.3" x2="1854.5" y2="462.6" stroke="#4a9a70" stroke-width="1" /><line x1="279.6" y1="166.5" x2="1899.9" y2="533.8" stroke="#4a9a70" stroke-width="1" /><line x1="213.6" y1="185.5" x2="1956.7" y2="623.0" stroke="#4a9a70" stroke-width="1" /><line x1="139.7" y1="206.9" x2="2029.9" y2="738.1" stroke="#4a9a70" stroke-width="1" /><line x1="56.5" y1="230.9" x2="2128.0" y2="892.0" stroke="#4a9a70" stroke-width="1" /><line x1="-38.1" y1="258.2" x2="2266.0" y2="1108.8" stroke="#4a9a70" stroke-width="1" /><line x1="-146.4" y1="289.5" x2="2474.6" y2="1436.4" stroke="#4a9a70" stroke-width="1" /><line x1="-271.6" y1="325.6" x2="2826.6" y2="1989.3" stroke="#4a9a70" stroke-width="1" /><line x1="-418.2" y1="368.0" x2="3547.7" y2="3121.7" stroke="#4a9a70" stroke-width="1" /><line x1="-592.1" y1="418.2" x2="5856.3" y2="6747.5" stroke="#4a9a70" stroke-width="1" /><line x1="-801.7" y1="478.7" x2="-42222.5" y2="-68762.2" stroke="#4a9a70" stroke-width="1" /><line x1="-1059.2" y1="553.1" x2="-2215.3" y2="-5929.3" stroke="#4a9a70" stroke-width="1" /></g><polygon points="258,768 501,571 500.6,579 258,779" fill="#1ca034" /><polygon points="501,571 674,647 670,653 500.6,579" fill="#1ca034" /><polygon points="674,647 697.5,623 691,607 709,616 670,653" fill="#1ca034" /><polyline points="258,779 500.6,579 670,653 709,616" fill="none" stroke="#5fd0b0" stroke-width="0.8" /><polygon points="1327,281 1334,281 1150,1095 1135,1095" fill="#1ca034" /><line x1="1327" y1="281" x2="1135" y2="1095" stroke="#5fd0b0" stroke-width="0.8" /><polygon points="258,134 356,134 403,222 258,186" fill="#2f2e2f" /><polygon points="258,200 504,266 534,253 554,261 508,284 272,221" fill="#34293a" /><polygon points="258,186 534,253 504,267 258,200" fill="#436870" /><polyline points="258,186 534,253 504,267 258,200" fill="none" stroke="#56b8b0" stroke-width="1" /><line x1="258" y1="189.5" x2="530" y2="256.5" stroke="#7fb8d0" stroke-width="1" stroke-dasharray="3 3"/><line x1="258" y1="197.5" x2="508" y2="264" stroke="#5b80c4" stroke-width="1" stroke-dasharray="3 3"/><line x1="258" y1="201" x2="272" y2="221" stroke="#5b80c4" stroke-width="1" stroke-dasharray="1.5 2"/><line x1="272" y1="222" x2="508" y2="284" stroke="#5b80c4" stroke-width="1" /><polygon points="272,221 508,284 673.5,647.5 502,572" fill="#2f2e2f" /><polygon points="508,284 554,261 697.5,623 673.5,647.5" fill="#061b1a" /><line x1="508" y1="284" x2="673.5" y2="647.5" stroke="#5b80c4" stroke-width="1" /><line x1="557" y1="270" x2="675.7" y2="647.7" stroke="#7a9ad0" stroke-width="1" stroke-dasharray="1.5 1.5"/><polygon points="573,134 1015,134 997,391 626,297 609,241" fill="#2f2e2f" /><line x1="626" y1="297" x2="997" y2="391" stroke="#4a9aa0" stroke-width="1" /><polygon points="1015,134 1027,134 1011,390 997,391" fill="#061b1a" /><line x1="1015" y1="134" x2="997" y2="391" stroke="#5b80c4" stroke-width="1" /><line x1="1024.5" y1="134" x2="1005.5" y2="391" stroke="#6a9ad8" stroke-width="1" stroke-dasharray="3 4"/><line x1="1058" y1="137" x2="1055" y2="172" stroke="#5b80c4" stroke-width="1" stroke-dasharray="4 4"/><line x1="1022" y1="196.5" x2="1050" y2="193.6" stroke="#60b0c0" stroke-width="1" stroke-dasharray="3 4"/><polygon points="997,391 1011,390 1015,376 1004,392" fill="#1ca034" /><polygon points="1027,134 1396,134 1331,281 1049,229 1055,173 1024,169" fill="#2f2e2f" /><polyline points="1024,169 1055,173 1049,229 1331,281" fill="none" stroke="#4a9aa0" stroke-width="1.5" /><line x1="1396" y1="134" x2="1331" y2="281" stroke="#5b80c4" stroke-width="1" /><line x1="1055" y1="230" x2="1240" y2="134" stroke="#5b80c4" stroke-width="1" stroke-dasharray="1.5 2.5"/><line x1="1030" y1="150" x2="1059" y2="134" stroke="#5b80c4" stroke-width="1" stroke-dasharray="1.5 2.5"/><polygon points="1443,134 1453,134 1460,190 1473,430 1501,730 1524,1095 1464,1095 1456,730 1449,430" fill="#34293a" /><polygon points="1453,134 1482,134 1528,430 1554,553 1583,730 1612,905 1612,1095 1524,1095 1501,730 1473,430 1460,190" fill="#436870" /><polygon points="1482,134 1487,134 1535,430 1554,553 1528,430" fill="#2a2236" /><polygon points="1487,134 1583,134 1612,200 1612,905 1583,730 1554,553 1535,430" fill="#35ad6d" /><polygon points="1583,134 1612,134 1612,200" fill="#10c424" /><line x1="1583" y1="134" x2="1612" y2="200" stroke="#60d0d0" stroke-width="1" /><polyline points="1443,134 1449,430 1456,730 1464,1095" fill="none" stroke="#5b80c4" stroke-width="1" /><polyline points="1453,134 1460,190 1473,430 1501,730 1524,1095" fill="none" stroke="#56b8b0" stroke-width="1" /><polyline points="1470,134 1512,430 1540,603 1590,920 1612,1044" fill="none" stroke="#5b80c4" stroke-width="1" /><polyline points="1487,134 1535,430 1554,553 1583,730 1612,905" fill="none" stroke="#56b8b0" stroke-width="1" /><line x1="1362" y1="275" x2="1362" y2="390" stroke="#5b80c4" stroke-width="1" /><line x1="1362" y1="500" x2="1362" y2="612" stroke="#5b80c4" stroke-width="1" /><line x1="1362" y1="720" x2="1362" y2="840" stroke="#5b80c4" stroke-width="1" /><line x1="1363" y1="950" x2="1363" y2="1065" stroke="#5b80c4" stroke-width="1" /><clipPath id="rc"><polygon points="1487,134 1583,134 1612,200 1612,905 1583,730 1554,553 1535,430" fill="#fff" /></clipPath><g clip-path="url(#rc)"><line x1="1480" y1="135.4" x2="1612" y2="141.9" stroke="#4a9a70" stroke-width="1" /><line x1="1480" y1="143.6" x2="1612" y2="157.6" stroke="#4a9a70" stroke-width="1" /><line x1="1480" y1="159.0" x2="1612" y2="173.3" stroke="#4a9a70" stroke-width="1" /><line x1="1480" y1="176.0" x2="1612" y2="191.7" stroke="#4a9a70" stroke-width="1" /><line x1="1480" y1="195.5" x2="1612" y2="213.5" stroke="#4a9a70" stroke-width="1" /><line x1="1480" y1="217.8" x2="1612" y2="236.3" stroke="#4a9a70" stroke-width="1" /><line x1="1480" y1="243.4" x2="1612" y2="262.5" stroke="#4a9a70" stroke-width="1" /><line x1="1480" y1="272.3" x2="1612" y2="292.2" stroke="#4a9a70" stroke-width="1" /><line x1="1480" y1="305.2" x2="1612" y2="326.3" stroke="#4a9a70" stroke-width="1" /><line x1="1480" y1="342.3" x2="1612" y2="366.8" stroke="#4a9a70" stroke-width="1" /><line x1="1480" y1="386.8" x2="1612" y2="414.1" stroke="#4a9a70" stroke-width="1" /><line x1="1480" y1="503.8" x2="1612" y2="537.4" stroke="#4a9a70" stroke-width="1" /><line x1="1480" y1="584.8" x2="1612" y2="621.4" stroke="#4a9a70" stroke-width="1" /><line x1="1480" y1="689.5" x2="1612" y2="727.3" stroke="#4a9a70" stroke-width="1" /><line x1="1516.7" y1="134" x2="1611.5" y2="547.8" stroke="#4a9a70" stroke-width="1" /></g><line x1="1538" y1="453.4" x2="1612" y2="469.1" stroke="#e03050" stroke-width="1.2" /><line x1="1010" y1="333" x2="1310" y2="400" stroke="#e03050" stroke-width="1.2" /><polygon points="612.8,297.2 602.7,303.4 603.4,326.9 612,347.2 626.9,364.4 645.6,373 650.3,359.7 647.2,340.9 637.8,323.8 631.6,312.8" fill="url(#rg)" opacity="0.6"/><path d="M622.2 305.0 Q612.8 297.2 607.8 300.3 Q602.7 303.4 603.0 315.1 Q603.4 326.9 607.7 337.0 Q612.0 347.2 619.5 355.8 Q626.9 364.4 636.2 368.7 Q645.6 373.0 648.0 366.4 Q650.3 359.7 648.8 350.3 Q647.2 340.9 642.5 332.4 Q637.8 323.8 634.7 318.3 Q631.6 312.8 622.2 305.0Z" fill="url(#rg)"/><g opacity="0.55"><polyline points="621.2035,314.1785 611.6485,317.58849999999995 616.0335,330.51349999999996 616.7635,341.6785 628.9585,351.13849999999996 635.2435,355.8685 641.8285,348.5535 636.1235,338.21349999999995 634.9535,328.8085 627.5435,322.75849999999997 621.2035,314.1785" fill="none" stroke="#a09ac0" stroke-width="0.6" stroke-dasharray="2.5 1.5"/><line x1="612.8" y1="297.2" x2="621.2035" y2="314.1785" stroke="#a09ac0" stroke-width="0.6" /><line x1="612.8" y1="297.2" x2="611.6485" y2="317.58849999999995" stroke="#a09ac0" stroke-width="0.5" stroke-dasharray="2 1.5"/><line x1="621.2035" y1="314.1785" x2="624.184" y2="327.38399999999996" stroke="#a09ac0" stroke-width="0.5" stroke-dasharray="2 1.5"/><line x1="602.7" y1="303.4" x2="611.6485" y2="317.58849999999995" stroke="#a09ac0" stroke-width="0.6" /><line x1="602.7" y1="303.4" x2="616.0335" y2="330.51349999999996" stroke="#a09ac0" stroke-width="0.5" stroke-dasharray="2 1.5"/><line x1="603.4" y1="326.9" x2="616.0335" y2="330.51349999999996" stroke="#a09ac0" stroke-width="0.6" /><line x1="603.4" y1="326.9" x2="616.7635" y2="341.6785" stroke="#a09ac0" stroke-width="0.5" stroke-dasharray="2 1.5"/><line x1="616.0335" y1="330.51349999999996" x2="622.304" y2="333.32399999999996" stroke="#a09ac0" stroke-width="0.5" stroke-dasharray="2 1.5"/><line x1="612" y1="347.2" x2="616.7635" y2="341.6785" stroke="#a09ac0" stroke-width="0.6" /><line x1="612" y1="347.2" x2="628.9585" y2="351.13849999999996" stroke="#a09ac0" stroke-width="0.5" stroke-dasharray="2 1.5"/><line x1="626.9" y1="364.4" x2="628.9585" y2="351.13849999999996" stroke="#a09ac0" stroke-width="0.6" /><line x1="626.9" y1="364.4" x2="635.2435" y2="355.8685" stroke="#a09ac0" stroke-width="0.5" stroke-dasharray="2 1.5"/><line x1="628.9585" y1="351.13849999999996" x2="627.004" y2="340.82399999999996" stroke="#a09ac0" stroke-width="0.5" stroke-dasharray="2 1.5"/><line x1="645.6" y1="373" x2="635.2435" y2="355.8685" stroke="#a09ac0" stroke-width="0.6" /><line x1="645.6" y1="373" x2="641.8285" y2="348.5535" stroke="#a09ac0" stroke-width="0.5" stroke-dasharray="2 1.5"/><line x1="650.3" y1="359.7" x2="641.8285" y2="348.5535" stroke="#a09ac0" stroke-width="0.6" /><line x1="650.3" y1="359.7" x2="636.1235" y2="338.21349999999995" stroke="#a09ac0" stroke-width="0.5" stroke-dasharray="2 1.5"/><line x1="641.8285" y1="348.5535" x2="631.684" y2="339.88399999999996" stroke="#a09ac0" stroke-width="0.5" stroke-dasharray="2 1.5"/><line x1="647.2" y1="340.9" x2="636.1235" y2="338.21349999999995" stroke="#a09ac0" stroke-width="0.6" /><line x1="647.2" y1="340.9" x2="634.9535" y2="328.8085" stroke="#a09ac0" stroke-width="0.5" stroke-dasharray="2 1.5"/><line x1="637.8" y1="323.8" x2="634.9535" y2="328.8085" stroke="#a09ac0" stroke-width="0.6" /><line x1="637.8" y1="323.8" x2="627.5435" y2="322.75849999999997" stroke="#a09ac0" stroke-width="0.5" stroke-dasharray="2 1.5"/><line x1="634.9535" y1="328.8085" x2="629.184" y2="332.70399999999995" stroke="#a09ac0" stroke-width="0.5" stroke-dasharray="2 1.5"/><line x1="631.6" y1="312.8" x2="627.5435" y2="322.75849999999997" stroke="#a09ac0" stroke-width="0.6" /><line x1="631.6" y1="312.8" x2="621.2035" y2="314.1785" stroke="#a09ac0" stroke-width="0.5" stroke-dasharray="2 1.5"/><polyline points="612.8,297.2 602.7,303.4 603.4,326.9 612,347.2 626.9,364.4 645.6,373 650.3,359.7 647.2,340.9 637.8,323.8 631.6,312.8 612.8,297.2" fill="none" stroke="#8a84a8" stroke-width="0.6" /></g><polygon points="830.8,351.9 815.2,357.3 810.5,380 816,406.6 831.6,425.3 848.75,430.8 860.5,417.5 861.25,394 851.9,367.5 842.5,360.5" fill="url(#rg)" opacity="0.6"/><path d="M836.6 356.2 Q830.8 351.9 823.0 354.6 Q815.2 357.3 812.9 368.6 Q810.5 380.0 813.2 393.3 Q816.0 406.6 823.8 416.0 Q831.6 425.3 840.2 428.1 Q848.8 430.8 854.6 424.1 Q860.5 417.5 860.9 405.8 Q861.2 394.0 856.6 380.8 Q851.9 367.5 847.2 364.0 Q842.5 360.5 836.6 356.2Z" fill="url(#rg)"/><g opacity="0.55"><polyline points="835.545,368.65799999999996 822.965,371.628 824.38,384.113 823.405,398.743 835.985,409.028 841.4175,412.053 851.88,404.738 848.2925,391.813 847.15,377.238 837.98,373.388 835.545,368.65799999999996" fill="none" stroke="#a09ac0" stroke-width="0.6" stroke-dasharray="2.5 1.5"/><line x1="830.8" y1="351.9" x2="835.545" y2="368.65799999999996" stroke="#a09ac0" stroke-width="0.6" /><line x1="830.8" y1="351.9" x2="822.965" y2="371.628" stroke="#a09ac0" stroke-width="0.5" stroke-dasharray="2 1.5"/><line x1="835.545" y1="368.65799999999996" x2="835.68" y2="381.692" stroke="#a09ac0" stroke-width="0.5" stroke-dasharray="2 1.5"/><line x1="815.2" y1="357.3" x2="822.965" y2="371.628" stroke="#a09ac0" stroke-width="0.6" /><line x1="815.2" y1="357.3" x2="824.38" y2="384.113" stroke="#a09ac0" stroke-width="0.5" stroke-dasharray="2 1.5"/><line x1="810.5" y1="380" x2="824.38" y2="384.113" stroke="#a09ac0" stroke-width="0.6" /><line x1="810.5" y1="380" x2="823.405" y2="398.743" stroke="#a09ac0" stroke-width="0.5" stroke-dasharray="2 1.5"/><line x1="824.38" y1="384.113" x2="831.62" y2="387.312" stroke="#a09ac0" stroke-width="0.5" stroke-dasharray="2 1.5"/><line x1="816" y1="406.6" x2="823.405" y2="398.743" stroke="#a09ac0" stroke-width="0.6" /><line x1="816" y1="406.6" x2="835.985" y2="409.028" stroke="#a09ac0" stroke-width="0.5" stroke-dasharray="2 1.5"/><line x1="831.6" y1="425.3" x2="835.985" y2="409.028" stroke="#a09ac0" stroke-width="0.6" /><line x1="831.6" y1="425.3" x2="841.4175" y2="412.053" stroke="#a09ac0" stroke-width="0.5" stroke-dasharray="2 1.5"/><line x1="835.985" y1="409.028" x2="835.84" y2="396.372" stroke="#a09ac0" stroke-width="0.5" stroke-dasharray="2 1.5"/><line x1="848.75" y1="430.8" x2="841.4175" y2="412.053" stroke="#a09ac0" stroke-width="0.6" /><line x1="848.75" y1="430.8" x2="851.88" y2="404.738" stroke="#a09ac0" stroke-width="0.5" stroke-dasharray="2 1.5"/><line x1="860.5" y1="417.5" x2="851.88" y2="404.738" stroke="#a09ac0" stroke-width="0.6" /><line x1="860.5" y1="417.5" x2="848.2925" y2="391.813" stroke="#a09ac0" stroke-width="0.5" stroke-dasharray="2 1.5"/><line x1="851.88" y1="404.738" x2="841.62" y2="394.812" stroke="#a09ac0" stroke-width="0.5" stroke-dasharray="2 1.5"/><line x1="861.25" y1="394" x2="848.2925" y2="391.813" stroke="#a09ac0" stroke-width="0.6" /><line x1="861.25" y1="394" x2="847.15" y2="377.238" stroke="#a09ac0" stroke-width="0.5" stroke-dasharray="2 1.5"/><line x1="851.9" y1="367.5" x2="847.15" y2="377.238" stroke="#a09ac0" stroke-width="0.6" /><line x1="851.9" y1="367.5" x2="837.98" y2="373.388" stroke="#a09ac0" stroke-width="0.5" stroke-dasharray="2 1.5"/><line x1="847.15" y1="377.238" x2="839.9" y2="384.812" stroke="#a09ac0" stroke-width="0.5" stroke-dasharray="2 1.5"/><line x1="842.5" y1="360.5" x2="837.98" y2="373.388" stroke="#a09ac0" stroke-width="0.6" /><line x1="842.5" y1="360.5" x2="835.545" y2="368.65799999999996" stroke="#a09ac0" stroke-width="0.5" stroke-dasharray="2 1.5"/><polyline points="830.8,351.9 815.2,357.3 810.5,380 816,406.6 831.6,425.3 848.75,430.8 860.5,417.5 861.25,394 851.9,367.5 842.5,360.5 830.8,351.9" fill="none" stroke="#8a84a8" stroke-width="0.6" /></g><polygon points="1203,224.4 1186,229.7 1172.9,249.3 1170.2,272.9 1178.1,288.6 1191.2,293.4 1208.2,280.8 1217.4,258.5 1216.1,234.9" fill="url(#rg)" opacity="0.6"/><path d="M1209.5 229.7 Q1203.0 224.4 1194.5 227.1 Q1186.0 229.7 1179.5 239.5 Q1172.9 249.3 1171.6 261.1 Q1170.2 272.9 1174.2 280.8 Q1178.1 288.6 1184.7 291.0 Q1191.2 293.4 1199.7 287.1 Q1208.2 280.8 1212.8 269.6 Q1217.4 258.5 1216.8 246.7 Q1216.1 234.9 1209.5 229.7Z" fill="url(#rg)"/><g opacity="0.55"><polyline points="1200.805,240.04500000000002 1187.4550000000002,242.96 1184.25,253.74 1178.765,266.71999999999997 1187.1100000000001,275.355 1190.315,277.995 1203.6650000000002,271.065 1204.7250000000001,258.8 1208.01,245.82000000000002 1200.805,240.04500000000002" fill="none" stroke="#a09ac0" stroke-width="0.6" stroke-dasharray="2.5 1.5"/><line x1="1203" y1="224.4" x2="1200.805" y2="240.04500000000002" stroke="#a09ac0" stroke-width="0.6" /><line x1="1203" y1="224.4" x2="1187.4550000000002" y2="242.96" stroke="#a09ac0" stroke-width="0.5" stroke-dasharray="2 1.5"/><line x1="1200.805" y1="240.04500000000002" x2="1195.5422222222223" y2="252.21333333333334" stroke="#a09ac0" stroke-width="0.5" stroke-dasharray="2 1.5"/><line x1="1186" y1="229.7" x2="1187.4550000000002" y2="242.96" stroke="#a09ac0" stroke-width="0.6" /><line x1="1186" y1="229.7" x2="1184.25" y2="253.74" stroke="#a09ac0" stroke-width="0.5" stroke-dasharray="2 1.5"/><line x1="1172.9" y1="249.3" x2="1184.25" y2="253.74" stroke="#a09ac0" stroke-width="0.6" /><line x1="1172.9" y1="249.3" x2="1178.765" y2="266.71999999999997" stroke="#a09ac0" stroke-width="0.5" stroke-dasharray="2 1.5"/><line x1="1184.25" y1="253.74" x2="1189.5222222222224" y2="257.1933333333333" stroke="#a09ac0" stroke-width="0.5" stroke-dasharray="2 1.5"/><line x1="1170.2" y1="272.9" x2="1178.765" y2="266.71999999999997" stroke="#a09ac0" stroke-width="0.6" /><line x1="1170.2" y1="272.9" x2="1187.1100000000001" y2="275.355" stroke="#a09ac0" stroke-width="0.5" stroke-dasharray="2 1.5"/><line x1="1178.1" y1="288.6" x2="1187.1100000000001" y2="275.355" stroke="#a09ac0" stroke-width="0.6" /><line x1="1178.1" y1="288.6" x2="1190.315" y2="277.995" stroke="#a09ac0" stroke-width="0.5" stroke-dasharray="2 1.5"/><line x1="1187.1100000000001" y1="275.355" x2="1190.5622222222223" y2="265.05333333333334" stroke="#a09ac0" stroke-width="0.5" stroke-dasharray="2 1.5"/><line x1="1191.2" y1="293.4" x2="1190.315" y2="277.995" stroke="#a09ac0" stroke-width="0.6" /><line x1="1191.2" y1="293.4" x2="1203.6650000000002" y2="271.065" stroke="#a09ac0" stroke-width="0.5" stroke-dasharray="2 1.5"/><line x1="1208.2" y1="280.8" x2="1203.6650000000002" y2="271.065" stroke="#a09ac0" stroke-width="0.6" /><line x1="1208.2" y1="280.8" x2="1204.7250000000001" y2="258.8" stroke="#a09ac0" stroke-width="0.5" stroke-dasharray="2 1.5"/><line x1="1203.6650000000002" y1="271.065" x2="1196.5822222222223" y2="263.49333333333334" stroke="#a09ac0" stroke-width="0.5" stroke-dasharray="2 1.5"/><line x1="1217.4" y1="258.5" x2="1204.7250000000001" y2="258.8" stroke="#a09ac0" stroke-width="0.6" /><line x1="1217.4" y1="258.5" x2="1208.01" y2="245.82000000000002" stroke="#a09ac0" stroke-width="0.5" stroke-dasharray="2 1.5"/><line x1="1216.1" y1="234.9" x2="1208.01" y2="245.82000000000002" stroke="#a09ac0" stroke-width="0.6" /><line x1="1216.1" y1="234.9" x2="1200.805" y2="240.04500000000002" stroke="#a09ac0" stroke-width="0.5" stroke-dasharray="2 1.5"/><line x1="1208.01" y1="245.82000000000002" x2="1198.1622222222222" y2="254.31333333333336" stroke="#a09ac0" stroke-width="0.5" stroke-dasharray="2 1.5"/><polyline points="1203,224.4 1186,229.7 1172.9,249.3 1170.2,272.9 1178.1,288.6 1191.2,293.4 1208.2,280.8 1217.4,258.5 1216.1,234.9 1203,224.4" fill="none" stroke="#8a84a8" stroke-width="0.6" /></g><polygon points="1155.8,303.8 1137.5,309 1121.7,330.6 1119.1,355.5 1129.6,373.8 1145.3,379.1 1163.7,367.3 1174.7,341.1 1171.5,318.8" fill="url(#rg)" opacity="0.6"/><path d="M1163.7 311.3 Q1155.8 303.8 1146.7 306.4 Q1137.5 309.0 1129.6 319.8 Q1121.7 330.6 1120.4 343.1 Q1119.1 355.5 1124.3 364.6 Q1129.6 373.8 1137.4 376.5 Q1145.3 379.1 1154.5 373.2 Q1163.7 367.3 1169.2 354.2 Q1174.7 341.1 1173.1 330.0 Q1171.5 318.8 1163.7 311.3Z" fill="url(#rg)"/><g opacity="0.55"><polyline points="1153.635,321.03999999999996 1139.57,323.9 1134.88,335.78 1129.45,349.47499999999997 1139.225,359.54 1143.86,362.455 1157.98,355.965 1160.03,341.555 1162.27,329.29 1153.635,321.03999999999996" fill="none" stroke="#a09ac0" stroke-width="0.6" stroke-dasharray="2.5 1.5"/><line x1="1155.8" y1="303.8" x2="1153.635" y2="321.03999999999996" stroke="#a09ac0" stroke-width="0.6" /><line x1="1155.8" y1="303.8" x2="1139.57" y2="323.9" stroke="#a09ac0" stroke-width="0.5" stroke-dasharray="2 1.5"/><line x1="1153.635" y1="321.03999999999996" x2="1148.3955555555556" y2="334.44888888888886" stroke="#a09ac0" stroke-width="0.5" stroke-dasharray="2 1.5"/><line x1="1137.5" y1="309" x2="1139.57" y2="323.9" stroke="#a09ac0" stroke-width="0.6" /><line x1="1137.5" y1="309" x2="1134.88" y2="335.78" stroke="#a09ac0" stroke-width="0.5" stroke-dasharray="2 1.5"/><line x1="1121.7" y1="330.6" x2="1134.88" y2="335.78" stroke="#a09ac0" stroke-width="0.6" /><line x1="1121.7" y1="330.6" x2="1129.45" y2="349.47499999999997" stroke="#a09ac0" stroke-width="0.5" stroke-dasharray="2 1.5"/><line x1="1134.88" y1="335.78" x2="1141.5755555555556" y2="339.8088888888889" stroke="#a09ac0" stroke-width="0.5" stroke-dasharray="2 1.5"/><line x1="1119.1" y1="355.5" x2="1129.45" y2="349.47499999999997" stroke="#a09ac0" stroke-width="0.6" /><line x1="1119.1" y1="355.5" x2="1139.225" y2="359.54" stroke="#a09ac0" stroke-width="0.5" stroke-dasharray="2 1.5"/><line x1="1129.6" y1="373.8" x2="1139.225" y2="359.54" stroke="#a09ac0" stroke-width="0.6" /><line x1="1129.6" y1="373.8" x2="1143.86" y2="362.455" stroke="#a09ac0" stroke-width="0.5" stroke-dasharray="2 1.5"/><line x1="1139.225" y1="359.54" x2="1143.1555555555556" y2="348.44888888888886" stroke="#a09ac0" stroke-width="0.5" stroke-dasharray="2 1.5"/><line x1="1145.3" y1="379.1" x2="1143.86" y2="362.455" stroke="#a09ac0" stroke-width="0.6" /><line x1="1145.3" y1="379.1" x2="1157.98" y2="355.965" stroke="#a09ac0" stroke-width="0.5" stroke-dasharray="2 1.5"/><line x1="1163.7" y1="367.3" x2="1157.98" y2="355.965" stroke="#a09ac0" stroke-width="0.6" /><line x1="1163.7" y1="367.3" x2="1160.03" y2="341.555" stroke="#a09ac0" stroke-width="0.5" stroke-dasharray="2 1.5"/><line x1="1157.98" y1="355.965" x2="1149.9755555555555" y2="347.14888888888885" stroke="#a09ac0" stroke-width="0.5" stroke-dasharray="2 1.5"/><line x1="1174.7" y1="341.1" x2="1160.03" y2="341.555" stroke="#a09ac0" stroke-width="0.6" /><line x1="1174.7" y1="341.1" x2="1162.27" y2="329.29" stroke="#a09ac0" stroke-width="0.5" stroke-dasharray="2 1.5"/><line x1="1171.5" y1="318.8" x2="1162.27" y2="329.29" stroke="#a09ac0" stroke-width="0.6" /><line x1="1171.5" y1="318.8" x2="1153.635" y2="321.03999999999996" stroke="#a09ac0" stroke-width="0.5" stroke-dasharray="2 1.5"/><line x1="1162.27" y1="329.29" x2="1151.5355555555557" y2="337.44888888888886" stroke="#a09ac0" stroke-width="0.5" stroke-dasharray="2 1.5"/><polyline points="1155.8,303.8 1137.5,309 1121.7,330.6 1119.1,355.5 1129.6,373.8 1145.3,379.1 1163.7,367.3 1174.7,341.1 1171.5,318.8 1155.8,303.8" fill="none" stroke="#8a84a8" stroke-width="0.6" /></g><polygon points="1085,417.1 1061.5,422.3 1047,443.3 1047,472.1 1058.8,493.1 1081.1,498.3 1102.1,481.3 1110,459 1106,434.1" fill="url(#rg)" opacity="0.6"/><path d="M1095.5 425.6 Q1085.0 417.1 1073.2 419.7 Q1061.5 422.3 1054.2 432.8 Q1047.0 443.3 1047.0 457.7 Q1047.0 472.1 1052.9 482.6 Q1058.8 493.1 1069.9 495.7 Q1081.1 498.3 1091.6 489.8 Q1102.1 481.3 1106.0 470.1 Q1110.0 459.0 1108.0 446.6 Q1106.0 434.1 1095.5 425.6Z" fill="url(#rg)"/><g opacity="0.55"><polyline points="1083.675,435.43500000000006 1066.75,438.295 1062.775,449.845 1058.775,465.68500000000006 1069.2649999999999,477.235 1077.53,480.095 1093.08,470.745 1093.425,458.48 1095.225,444.785 1083.675,435.43500000000006" fill="none" stroke="#a09ac0" stroke-width="0.6" stroke-dasharray="2.5 1.5"/><line x1="1085" y1="417.1" x2="1083.675" y2="435.43500000000006" stroke="#a09ac0" stroke-width="0.6" /><line x1="1085" y1="417.1" x2="1066.75" y2="438.295" stroke="#a09ac0" stroke-width="0.5" stroke-dasharray="2 1.5"/><line x1="1083.675" y1="435.43500000000006" x2="1079.088888888889" y2="449.6955555555556" stroke="#a09ac0" stroke-width="0.5" stroke-dasharray="2 1.5"/><line x1="1061.5" y1="422.3" x2="1066.75" y2="438.295" stroke="#a09ac0" stroke-width="0.6" /><line x1="1061.5" y1="422.3" x2="1062.775" y2="449.845" stroke="#a09ac0" stroke-width="0.5" stroke-dasharray="2 1.5"/><line x1="1047" y1="443.3" x2="1062.775" y2="449.845" stroke="#a09ac0" stroke-width="0.6" /><line x1="1047" y1="443.3" x2="1058.775" y2="465.68500000000006" stroke="#a09ac0" stroke-width="0.5" stroke-dasharray="2 1.5"/><line x1="1062.775" y1="449.845" x2="1071.4888888888888" y2="454.9355555555556" stroke="#a09ac0" stroke-width="0.5" stroke-dasharray="2 1.5"/><line x1="1047" y1="472.1" x2="1058.775" y2="465.68500000000006" stroke="#a09ac0" stroke-width="0.6" /><line x1="1047" y1="472.1" x2="1069.2649999999999" y2="477.235" stroke="#a09ac0" stroke-width="0.5" stroke-dasharray="2 1.5"/><line x1="1058.8" y1="493.1" x2="1069.2649999999999" y2="477.235" stroke="#a09ac0" stroke-width="0.6" /><line x1="1058.8" y1="493.1" x2="1077.53" y2="480.095" stroke="#a09ac0" stroke-width="0.5" stroke-dasharray="2 1.5"/><line x1="1069.2649999999999" y1="477.235" x2="1073.848888888889" y2="464.8955555555556" stroke="#a09ac0" stroke-width="0.5" stroke-dasharray="2 1.5"/><line x1="1081.1" y1="498.3" x2="1077.53" y2="480.095" stroke="#a09ac0" stroke-width="0.6" /><line x1="1081.1" y1="498.3" x2="1093.08" y2="470.745" stroke="#a09ac0" stroke-width="0.5" stroke-dasharray="2 1.5"/><line x1="1102.1" y1="481.3" x2="1093.08" y2="470.745" stroke="#a09ac0" stroke-width="0.6" /><line x1="1102.1" y1="481.3" x2="1093.425" y2="458.48" stroke="#a09ac0" stroke-width="0.5" stroke-dasharray="2 1.5"/><line x1="1093.08" y1="470.745" x2="1082.5088888888888" y2="462.5355555555556" stroke="#a09ac0" stroke-width="0.5" stroke-dasharray="2 1.5"/><line x1="1110" y1="459" x2="1093.425" y2="458.48" stroke="#a09ac0" stroke-width="0.6" /><line x1="1110" y1="459" x2="1095.225" y2="444.785" stroke="#a09ac0" stroke-width="0.5" stroke-dasharray="2 1.5"/><line x1="1106" y1="434.1" x2="1095.225" y2="444.785" stroke="#a09ac0" stroke-width="0.6" /><line x1="1106" y1="434.1" x2="1083.675" y2="435.43500000000006" stroke="#a09ac0" stroke-width="0.5" stroke-dasharray="2 1.5"/><line x1="1095.225" y1="444.785" x2="1083.2888888888888" y2="453.0955555555556" stroke="#a09ac0" stroke-width="0.5" stroke-dasharray="2 1.5"/><polyline points="1085,417.1 1061.5,422.3 1047,443.3 1047,472.1 1058.8,493.1 1081.1,498.3 1102.1,481.3 1110,459 1106,434.1 1085,417.1" fill="none" stroke="#8a84a8" stroke-width="0.6" /></g><polygon points="959.8,585 985.5,583.9 1011.2,604.1 1022.2,633.4 1014.9,661 991,666.5 963.5,651.8 948.8,626.1 945.2,605.9" fill="url(#rg)" opacity="0.6"/><path d="M952.5 595.5 Q959.8 585.0 972.6 584.5 Q985.5 583.9 998.4 594.0 Q1011.2 604.1 1016.7 618.8 Q1022.2 633.4 1018.5 647.2 Q1014.9 661.0 1003.0 663.8 Q991.0 666.5 977.2 659.1 Q963.5 651.8 956.1 639.0 Q948.8 626.1 947.0 616.0 Q945.2 605.9 952.5 595.5Z" fill="url(#rg)"/><g opacity="0.55"><polyline points="971.995,602.635 982.13,602.03 1000.2650000000001,613.14 1002.315,629.255 1002.3000000000001,644.435 985.1550000000001,647.46 974.0300000000001,639.375 961.945,625.24 963.965,614.13 971.995,602.635" fill="none" stroke="#a09ac0" stroke-width="0.6" stroke-dasharray="2.5 1.5"/><line x1="959.8" y1="585" x2="971.995" y2="602.635" stroke="#a09ac0" stroke-width="0.6" /><line x1="959.8" y1="585" x2="982.13" y2="602.03" stroke="#a09ac0" stroke-width="0.5" stroke-dasharray="2 1.5"/><line x1="971.995" y1="602.635" x2="977.9244444444445" y2="616.3511111111111" stroke="#a09ac0" stroke-width="0.5" stroke-dasharray="2 1.5"/><line x1="985.5" y1="583.9" x2="982.13" y2="602.03" stroke="#a09ac0" stroke-width="0.6" /><line x1="985.5" y1="583.9" x2="1000.2650000000001" y2="613.14" stroke="#a09ac0" stroke-width="0.5" stroke-dasharray="2 1.5"/><line x1="1011.2" y1="604.1" x2="1000.2650000000001" y2="613.14" stroke="#a09ac0" stroke-width="0.6" /><line x1="1011.2" y1="604.1" x2="1002.315" y2="629.255" stroke="#a09ac0" stroke-width="0.5" stroke-dasharray="2 1.5"/><line x1="1000.2650000000001" y1="613.14" x2="988.2044444444446" y2="620.1711111111111" stroke="#a09ac0" stroke-width="0.5" stroke-dasharray="2 1.5"/><line x1="1022.2" y1="633.4" x2="1002.315" y2="629.255" stroke="#a09ac0" stroke-width="0.6" /><line x1="1022.2" y1="633.4" x2="1002.3000000000001" y2="644.435" stroke="#a09ac0" stroke-width="0.5" stroke-dasharray="2 1.5"/><line x1="1014.9" y1="661" x2="1002.3000000000001" y2="644.435" stroke="#a09ac0" stroke-width="0.6" /><line x1="1014.9" y1="661" x2="985.1550000000001" y2="647.46" stroke="#a09ac0" stroke-width="0.5" stroke-dasharray="2 1.5"/><line x1="1002.3000000000001" y1="644.435" x2="988.9444444444445" y2="631.5511111111111" stroke="#a09ac0" stroke-width="0.5" stroke-dasharray="2 1.5"/><line x1="991" y1="666.5" x2="985.1550000000001" y2="647.46" stroke="#a09ac0" stroke-width="0.6" /><line x1="991" y1="666.5" x2="974.0300000000001" y2="639.375" stroke="#a09ac0" stroke-width="0.5" stroke-dasharray="2 1.5"/><line x1="963.5" y1="651.8" x2="974.0300000000001" y2="639.375" stroke="#a09ac0" stroke-width="0.6" /><line x1="963.5" y1="651.8" x2="961.945" y2="625.24" stroke="#a09ac0" stroke-width="0.5" stroke-dasharray="2 1.5"/><line x1="974.0300000000001" y1="639.375" x2="978.6644444444445" y2="629.7111111111111" stroke="#a09ac0" stroke-width="0.5" stroke-dasharray="2 1.5"/><line x1="948.8" y1="626.1" x2="961.945" y2="625.24" stroke="#a09ac0" stroke-width="0.6" /><line x1="948.8" y1="626.1" x2="963.965" y2="614.13" stroke="#a09ac0" stroke-width="0.5" stroke-dasharray="2 1.5"/><line x1="945.2" y1="605.9" x2="963.965" y2="614.13" stroke="#a09ac0" stroke-width="0.6" /><line x1="945.2" y1="605.9" x2="971.995" y2="602.635" stroke="#a09ac0" stroke-width="0.5" stroke-dasharray="2 1.5"/><line x1="963.965" y1="614.13" x2="975.0044444444445" y2="620.531111111111" stroke="#a09ac0" stroke-width="0.5" stroke-dasharray="2 1.5"/><polyline points="959.8,585 985.5,583.9 1011.2,604.1 1022.2,633.4 1014.9,661 991,666.5 963.5,651.8 948.8,626.1 945.2,605.9 959.8,585" fill="none" stroke="#8a84a8" stroke-width="0.6" /></g><polygon points="427.5,707.6 449.6,708.7 480.8,723.4 510.1,747.2 524.8,769.3 525.5,785.8 510.1,789.4 486.3,780.3 455.1,758.2 434.9,732.5" fill="url(#rg)" opacity="0.6"/><path d="M431.2 720.0 Q427.5 707.6 438.6 708.2 Q449.6 708.7 465.2 716.0 Q480.8 723.4 495.5 735.3 Q510.1 747.2 517.5 758.2 Q524.8 769.3 525.1 777.5 Q525.5 785.8 517.8 787.6 Q510.1 789.4 498.2 784.8 Q486.3 780.3 470.7 769.2 Q455.1 758.2 445.0 745.4 Q434.9 732.5 431.2 720.0Z" fill="url(#rg)"/><g opacity="0.55"><polyline points="453.3365,726.788 461.4915,727.393 482.6515,735.478 494.7665,748.568 506.8515,760.723 503.2365,769.798 498.7665,771.778 481.6765,766.773 468.5165,754.618 453.4065,740.483 453.3365,726.788" fill="none" stroke="#a09ac0" stroke-width="0.6" stroke-dasharray="2.5 1.5"/><line x1="427.5" y1="707.6" x2="453.3365" y2="726.788" stroke="#a09ac0" stroke-width="0.6" /><line x1="427.5" y1="707.6" x2="461.4915" y2="727.393" stroke="#a09ac0" stroke-width="0.5" stroke-dasharray="2 1.5"/><line x1="453.3365" y1="726.788" x2="469.876" y2="741.712" stroke="#a09ac0" stroke-width="0.5" stroke-dasharray="2 1.5"/><line x1="449.6" y1="708.7" x2="461.4915" y2="727.393" stroke="#a09ac0" stroke-width="0.6" /><line x1="449.6" y1="708.7" x2="482.6515" y2="735.478" stroke="#a09ac0" stroke-width="0.5" stroke-dasharray="2 1.5"/><line x1="480.8" y1="723.4" x2="482.6515" y2="735.478" stroke="#a09ac0" stroke-width="0.6" /><line x1="480.8" y1="723.4" x2="494.7665" y2="748.568" stroke="#a09ac0" stroke-width="0.5" stroke-dasharray="2 1.5"/><line x1="482.6515" y1="735.478" x2="480.536" y2="744.872" stroke="#a09ac0" stroke-width="0.5" stroke-dasharray="2 1.5"/><line x1="510.1" y1="747.2" x2="494.7665" y2="748.568" stroke="#a09ac0" stroke-width="0.6" /><line x1="510.1" y1="747.2" x2="506.8515" y2="760.723" stroke="#a09ac0" stroke-width="0.5" stroke-dasharray="2 1.5"/><line x1="524.8" y1="769.3" x2="506.8515" y2="760.723" stroke="#a09ac0" stroke-width="0.6" /><line x1="524.8" y1="769.3" x2="503.2365" y2="769.798" stroke="#a09ac0" stroke-width="0.5" stroke-dasharray="2 1.5"/><line x1="506.8515" y1="760.723" x2="489.33599999999996" y2="754.052" stroke="#a09ac0" stroke-width="0.5" stroke-dasharray="2 1.5"/><line x1="525.5" y1="785.8" x2="503.2365" y2="769.798" stroke="#a09ac0" stroke-width="0.6" /><line x1="525.5" y1="785.8" x2="498.7665" y2="771.778" stroke="#a09ac0" stroke-width="0.5" stroke-dasharray="2 1.5"/><line x1="510.1" y1="789.4" x2="498.7665" y2="771.778" stroke="#a09ac0" stroke-width="0.6" /><line x1="510.1" y1="789.4" x2="481.6765" y2="766.773" stroke="#a09ac0" stroke-width="0.5" stroke-dasharray="2 1.5"/><line x1="498.7665" y1="771.778" x2="486.39599999999996" y2="758.072" stroke="#a09ac0" stroke-width="0.5" stroke-dasharray="2 1.5"/><line x1="486.3" y1="780.3" x2="481.6765" y2="766.773" stroke="#a09ac0" stroke-width="0.6" /><line x1="486.3" y1="780.3" x2="468.5165" y2="754.618" stroke="#a09ac0" stroke-width="0.5" stroke-dasharray="2 1.5"/><line x1="455.1" y1="758.2" x2="468.5165" y2="754.618" stroke="#a09ac0" stroke-width="0.6" /><line x1="455.1" y1="758.2" x2="453.4065" y2="740.483" stroke="#a09ac0" stroke-width="0.5" stroke-dasharray="2 1.5"/><line x1="468.5165" y1="754.618" x2="475.39599999999996" y2="751.832" stroke="#a09ac0" stroke-width="0.5" stroke-dasharray="2 1.5"/><line x1="434.9" y1="732.5" x2="453.4065" y2="740.483" stroke="#a09ac0" stroke-width="0.6" /><line x1="434.9" y1="732.5" x2="453.3365" y2="726.788" stroke="#a09ac0" stroke-width="0.5" stroke-dasharray="2 1.5"/><polyline points="427.5,707.6 449.6,708.7 480.8,723.4 510.1,747.2 524.8,769.3 525.5,785.8 510.1,789.4 486.3,780.3 455.1,758.2 434.9,732.5 427.5,707.6" fill="none" stroke="#8a84a8" stroke-width="0.6" /></g><polygon points="778.1,883 800.1,875 825.8,883 858.9,905.1 873.6,930.8 873.6,954.6 855.2,958.3 825.8,949.2 794.6,927.1 776.3,897.7" fill="url(#rg)" opacity="0.6"/><path d="M777.2 890.4 Q778.1 883.0 789.1 879.0 Q800.1 875.0 813.0 879.0 Q825.8 883.0 842.3 894.0 Q858.9 905.1 866.2 918.0 Q873.6 930.8 873.6 942.7 Q873.6 954.6 864.4 956.5 Q855.2 958.3 840.5 953.8 Q825.8 949.2 810.2 938.2 Q794.6 927.1 785.5 912.4 Q776.3 897.7 777.2 890.4Z" fill="url(#rg)"/><g opacity="0.55"><polyline points="801.745,898.021 809.845,893.621 827.98,898.021 842.1850000000001,910.1759999999999 854.27,924.3109999999999 850.27,937.401 844.1500000000001,939.4359999999999 823.98,934.4309999999999 810.82,922.276 796.755,906.106 801.745,898.021" fill="none" stroke="#a09ac0" stroke-width="0.6" stroke-dasharray="2.5 1.5"/><line x1="778.1" y1="883" x2="801.745" y2="898.021" stroke="#a09ac0" stroke-width="0.6" /><line x1="778.1" y1="883" x2="809.845" y2="893.621" stroke="#a09ac0" stroke-width="0.5" stroke-dasharray="2 1.5"/><line x1="801.745" y1="898.021" x2="816.58" y2="909.704" stroke="#a09ac0" stroke-width="0.5" stroke-dasharray="2 1.5"/><line x1="800.1" y1="875" x2="809.845" y2="893.621" stroke="#a09ac0" stroke-width="0.6" /><line x1="800.1" y1="875" x2="827.98" y2="898.021" stroke="#a09ac0" stroke-width="0.5" stroke-dasharray="2 1.5"/><line x1="825.8" y1="883" x2="827.98" y2="898.021" stroke="#a09ac0" stroke-width="0.6" /><line x1="825.8" y1="883" x2="842.1850000000001" y2="910.1759999999999" stroke="#a09ac0" stroke-width="0.5" stroke-dasharray="2 1.5"/><line x1="827.98" y1="898.021" x2="826.12" y2="909.704" stroke="#a09ac0" stroke-width="0.5" stroke-dasharray="2 1.5"/><line x1="858.9" y1="905.1" x2="842.1850000000001" y2="910.1759999999999" stroke="#a09ac0" stroke-width="0.6" /><line x1="858.9" y1="905.1" x2="854.27" y2="924.3109999999999" stroke="#a09ac0" stroke-width="0.5" stroke-dasharray="2 1.5"/><line x1="873.6" y1="930.8" x2="854.27" y2="924.3109999999999" stroke="#a09ac0" stroke-width="0.6" /><line x1="873.6" y1="930.8" x2="850.27" y2="937.401" stroke="#a09ac0" stroke-width="0.5" stroke-dasharray="2 1.5"/><line x1="854.27" y1="924.3109999999999" x2="835.6800000000001" y2="919.2639999999999" stroke="#a09ac0" stroke-width="0.5" stroke-dasharray="2 1.5"/><line x1="873.6" y1="954.6" x2="850.27" y2="937.401" stroke="#a09ac0" stroke-width="0.6" /><line x1="873.6" y1="954.6" x2="844.1500000000001" y2="939.4359999999999" stroke="#a09ac0" stroke-width="0.5" stroke-dasharray="2 1.5"/><line x1="855.2" y1="958.3" x2="844.1500000000001" y2="939.4359999999999" stroke="#a09ac0" stroke-width="0.6" /><line x1="855.2" y1="958.3" x2="823.98" y2="934.4309999999999" stroke="#a09ac0" stroke-width="0.5" stroke-dasharray="2 1.5"/><line x1="844.1500000000001" y1="939.4359999999999" x2="832.0" y2="924.7639999999999" stroke="#a09ac0" stroke-width="0.5" stroke-dasharray="2 1.5"/><line x1="825.8" y1="949.2" x2="823.98" y2="934.4309999999999" stroke="#a09ac0" stroke-width="0.6" /><line x1="825.8" y1="949.2" x2="810.82" y2="922.276" stroke="#a09ac0" stroke-width="0.5" stroke-dasharray="2 1.5"/><line x1="794.6" y1="927.1" x2="810.82" y2="922.276" stroke="#a09ac0" stroke-width="0.6" /><line x1="794.6" y1="927.1" x2="796.755" y2="906.106" stroke="#a09ac0" stroke-width="0.5" stroke-dasharray="2 1.5"/><line x1="810.82" y1="922.276" x2="819.88" y2="918.5239999999999" stroke="#a09ac0" stroke-width="0.5" stroke-dasharray="2 1.5"/><line x1="776.3" y1="897.7" x2="796.755" y2="906.106" stroke="#a09ac0" stroke-width="0.6" /><line x1="776.3" y1="897.7" x2="801.745" y2="898.021" stroke="#a09ac0" stroke-width="0.5" stroke-dasharray="2 1.5"/><polyline points="778.1,883 800.1,875 825.8,883 858.9,905.1 873.6,930.8 873.6,954.6 855.2,958.3 825.8,949.2 794.6,927.1 776.3,897.7 778.1,883" fill="none" stroke="#8a84a8" stroke-width="0.6" /></g><polygon points="1026,140 1030,148 1029,165 1024,169" fill="#14124b" /><polygon points="906,528 916.4,509.8 928.9,510.9 952.7,518.9 952.7,532.5 941.4,540.5 917.5,534.8" fill="#1ca034" stroke="#60d0b0" stroke-width="0.6"/><g opacity="0.6" fill="none" stroke="#c8c8a8" stroke-width="0.6"><ellipse cx="930" cy="438.5" rx="16.5" ry="10.5"/><path d="M914 439 L915 533 M946.5 439 L945 533 M921 450 L921 533 M939 450 L939 533"/><ellipse cx="930" cy="530" rx="12" ry="5"/></g><path d="M923 487 L919.5 491 L917 524 L916.5 528 L923 528 L925 500 L929 497 L933 500 L936 527 L944 533 L945.5 529 L941 524 L940.5 491 L938.5 487Z" fill="#3f3b40"/><path d="M928 456 L928 461 L918 463 L906 467 L898 471 L896.5 475 L899 474.5 L907 471 L917 469.5 L920 478 L923 488 L938.5 488 L940 476 L943 476 L951 485 L962 491 L967 494.5 L968.5 492 L963 488 L952 481 L944 470 L939 464 L934 461 L934 456Z" fill="#5c5a69"/><path d="M925 470 L935 470 L938 482 L924 482Z" fill="#4a7a58" opacity="0.3"/><ellipse cx="930.6" cy="452.3" rx="4.4" ry="5.4" fill="#6c6a7c"/><line x1="573" y1="134" x2="608.6" y2="240.8" stroke="#a0dc10" stroke-width="2" /><line x1="608.6" y1="240.8" x2="695" y2="260.4" stroke="#e8344c" stroke-width="2.2" /><polygon points="692,256 698,253 721,267 696,270 693,265" fill="#e8344c" /><line x1="608.6" y1="240.8" x2="520" y2="283.4" stroke="#2d8ae8" stroke-width="2.2" /><polygon points="514,277 526,287.5 525.4,294.3 494.2,297.7" fill="#2d8ae8" /><polygon points="563.3,210.3 575.5,205.2 581.8,223.2 570,229" fill="#e8344c" /><polygon points="614,200.8 625.6,203.5 631.7,221.8 619.5,218.4" fill="#2d8ae8" /><polygon points="598.5,260.1 610.7,255 622.2,257 610,263.8" fill="#8ad10a" /><line x1="300" y1="134" x2="283" y2="195" stroke="#5b80c4" stroke-width="1" stroke-dasharray="1.5 2.5"/><line x1="336" y1="134" x2="405" y2="222" stroke="#5b80c4" stroke-width="1" stroke-dasharray="1.5 2.5"/><line x1="353" y1="134" x2="403" y2="222" stroke="#5b80c4" stroke-width="1" /><line x1="494" y1="298" x2="400" y2="420" stroke="#5b80c4" stroke-width="1" stroke-dasharray="3 3"/><line x1="400" y1="420" x2="400" y2="420" stroke="#5b80c4" stroke-width="1" /><line x1="1610" y1="330" x2="1100" y2="630" stroke="#3a5a90" stroke-width="0" /><line x1="736" y1="230" x2="920" y2="134" stroke="#5b80c4" stroke-width="1" stroke-dasharray="1.5 2.5"/><line x1="626" y1="297" x2="736" y2="230" stroke="#5b80c4" stroke-width="1" stroke-dasharray="1.5 2.5"/><line x1="620" y1="300" x2="736" y2="229" stroke="#5b80c4" stroke-width="0" /><line x1="577" y1="298" x2="610" y2="266" stroke="#5b80c4" stroke-width="1" stroke-dasharray="5 6"/><line x1="1571" y1="175" x2="1571" y2="156" stroke="#8ad50a" stroke-width="2" /><line x1="1571" y1="175" x2="1597" y2="184" stroke="#e8344c" stroke-width="2" /><line x1="1571" y1="175" x2="1558" y2="195" stroke="#2d8ae8" stroke-width="2" /><circle cx="1544.8" cy="165.8" r="7" fill="#a03848" stroke="#d06070" stroke-width="1"/><circle cx="1584.3" cy="154.6" r="7" fill="#2a70a8" stroke="#3a98d0" stroke-width="1"/><circle cx="1571.4" cy="193.8" r="7" fill="#5aa020" stroke="#70d030" stroke-width="1"/><circle cx="1570.9" cy="156" r="7.7" fill="#8ad50a"/><circle cx="1596.9" cy="184" r="7.7" fill="#e05060"/><circle cx="1557.8" cy="194.8" r="7.7" fill="#3090e8"/><text x="1570.9" y="160.3" text-anchor="middle" font-family="Liberation Sans" font-size="12.5" fill="#000">Y</text><text x="1596.9" y="188.3" text-anchor="middle" font-family="Liberation Sans" font-size="12.5" fill="#000">X</text><text x="1557.8" y="199.10000000000002" text-anchor="middle" font-family="Liberation Sans" font-size="12.5" fill="#000">Z</text><rect x="267" y="143" width="138" height="26" fill="#343a4c" opacity="0.55"/><circle cx="279" cy="150" r="1.9" fill="#e8e8e8"/><circle cx="279" cy="156" r="1.9" fill="#e8e8e8"/><circle cx="279" cy="162" r="1.9" fill="#e8e8e8"/></svg>
</div>
<div class="t" style="left:290px;top:143.0px;height:26px;line-height:26px;color:#d8dadf;">Перспективный</div>
<div class="a" style="left:256px;top:1107px;width:1358px;height:34px;background:#333b4f;"></div>
<div class="t" style="left:266px;top:1112.0px;height:26px;line-height:26px;">Вывод</div>
<div class="t" style="left:326px;top:1112.0px;height:26px;line-height:26px;">Отладчик</div>
<div class="t" style="left:409px;top:1112.0px;height:26px;line-height:26px;">Аудио</div>
<div class="t" style="left:466px;top:1112.0px;height:26px;line-height:26px;">Анимация</div>
<div class="t" style="left:1606px;top:1112.0px;height:26px;line-height:26px;color:#80848f;transform:translateX(-100%)">3.6.beta3</div>
<div class="a" style="left:1624px;top:72px;width:93px;height:28px;background:#333b4f;"></div>
<div class="t" style="left:1633px;top:72.0px;height:26px;line-height:26px;color:#cdd0d5;">Инспектор</div>
<div class="a" style="left:1717px;top:72px;width:52px;height:28px;background:#262c3b;"></div>
<div class="t" style="left:1727px;top:72.0px;height:26px;line-height:26px;color:#80848f;">Узел</div>
<svg style="left:1901px;top:77px" width="4" height="16" viewBox="0 0 4 16"><circle cx="2" cy="2.5" r="2" fill="#8a8d96"/><circle cx="2" cy="8" r="2" fill="#8a8d96"/><circle cx="2" cy="13.5" r="2" fill="#8a8d96"/></svg>
<div class="a" style="left:1624px;top:100px;width:286px;height:1041px;background:#333b4f;"></div>
<svg style="left:1635px;top:109px" width="14" height="16" viewBox="0 0 14 16"><path d="M0 0 H8 L12 4 V16 H0Z" fill="#e0e0e0"/><path d="M8 0 V4 H12" fill="#c0c0c0"/><path d="M10 9 V16 M6.5 12.5 H13.5" stroke="#5fe08a" stroke-width="2.2"/><path d="M9 8 H14 V16 H9Z" fill="none"/></svg>
<svg style="left:1666px;top:111px" width="15" height="13" viewBox="0 0 15 13"><path d="M0 1 H5 L6.5 3 H12 V5 H3 L1 13 H0Z" fill="#e0e0e0"/><path d="M3 6 H15 L13 13 H1Z" fill="#e0e0e0"/></svg>
<svg style="left:1698px;top:109px" width="15" height="15" viewBox="0 0 15 15"><path d="M0 1 Q0 0 1 0 H11 L15 4 V14 Q15 15 14 15 H1 Q0 15 0 14Z" fill="#8a8d96"/><rect x="3" y="1" width="8" height="4" fill="#333b4f"/><circle cx="7.5" cy="10" r="2" fill="#333b4f"/></svg>
<svg style="left:1735px;top:109px" width="4" height="16" viewBox="0 0 4 16"><circle cx="2" cy="2.5" r="2" fill="#e0e0e0"/><circle cx="2" cy="8" r="2" fill="#e0e0e0"/><circle cx="2" cy="13.5" r="2" fill="#e0e0e0"/></svg>
<svg style="left:1836px;top:110px" width="7" height="14" viewBox="0 0 7 14"><path d="M6 1 L1 7 L6 13" stroke="#e0e0e0" stroke-width="1.6" fill="none"/></svg>
<svg style="left:1860px;top:110px" width="7" height="14" viewBox="0 0 7 14"><path d="M1 1 L6 7 L1 13" stroke="#8a8d96" stroke-width="1.6" fill="none"/></svg>
<svg style="left:1884px;top:110px" width="16" height="15" viewBox="0 0 16 15"><path d="M4 11 A6 6 0 1 0 3 5" stroke="#e0e0e0" stroke-width="2" fill="none"/><path d="M0 3 L6 6 L1 8Z" fill="#e0e0e0"/><path d="M9 4 V8 H12" stroke="#e0e0e0" stroke-width="1.8" fill="none"/></svg>
<div class="a" style="left:1628px;top:134px;width:246px;height:26px;background:#252a38;border:1px solid #1d212b"></div>
<svg style="left:1634px;top:140px" width="12" height="14" viewBox="0 0 12 14"><path d="M6 0.5 L11.5 13 L6 10.5 L0.5 13Z" fill="#fc9c9c"/></svg>
<div class="t" style="left:1660px;top:134.0px;height:26px;line-height:26px;">Navigation</div>
<svg style="left:1857px;top:145.5px" width="8" height="5" viewBox="0 0 8 5"><path d="M0.5 0.5 L4 4 L7.5 0.5" stroke="#8a8d96" stroke-width="1.6" fill="none"/></svg>
<svg style="left:1883px;top:138px" width="18" height="18" viewBox="0 0 18 18"><circle cx="11" cy="5" r="3.5" stroke="#e0e0e0" stroke-width="2" fill="none"/><path d="M8.5 7.5 L5 11" stroke="#e0e0e0" stroke-width="2"/><text x="-0.5" y="17.5" font-family="Liberation Sans" font-weight="bold" font-size="8.5" fill="#e0e0e0" style="text-rendering:geometricPrecision">DOC</text></svg>
<div class="a" style="left:1628px;top:164px;width:246px;height:26px;background:#252a38;border:1px solid #1d212b"></div>
<div class="t" style="left:1634px;top:164.0px;height:26px;line-height:26px;color:#80848f;">Фильтр свойств</div>
<svg style="left:1852px;top:170px" width="14" height="14" viewBox="0 0 14 14"><circle cx="5.5" cy="5.5" r="4" stroke="#e0e0e0" stroke-width="2" fill="none"/><path d="M8.5 8.5 L13 13" stroke="#e0e0e0" stroke-width="2.4"/></svg>
<svg style="left:1884px;top:168px" width="14" height="16" viewBox="0 0 14 16"><path d="M3 0 V16 M10.5 6 V16" stroke="#e0e0e0" stroke-width="2.2"/><path d="M0.5 3 L3 0 L5.5 3Z" fill="#e0e0e0"/><path d="M7.5 0.5 V4 Q10.5 8 13.5 4 V0.5" stroke="#e0e0e0" stroke-width="1.6" fill="none"/></svg>
<div class="a" style="left:1628px;top:194px;width:278px;height:943px;background:#252b3a;border:1px solid #1b1f29"></div>
<div class="a" style="left:1632px;top:198px;width:270px;height:22px;background:#3d4456;"></div>
<svg style="left:1721px;top:202px" width="12" height="14" viewBox="0 0 12 14"><path d="M6 0.5 L11.5 13 L6 10.5 L0.5 13Z" fill="#fc9c9c"/></svg>
<div class="t" style="left:1740px;top:197.0px;height:26px;line-height:26px;">Navigation</div>
<div class="t" style="left:1633px;top:219.0px;height:26px;line-height:26px;">Up Vector</div>
<div class="a" style="left:1632px;top:242px;width:19px;height:26px;background:#1c2029;"></div>
<div class="a" style="left:1651px;top:242px;width:72px;height:26px;background:#20252f;"></div>
<div class="t" style="left:1637px;top:243.0px;height:26px;line-height:26px;color:#8d6a62;">x</div>
<div class="t" style="left:1655px;top:243.0px;height:26px;line-height:26px;">0</div>
<div class="a" style="left:1723px;top:242px;width:19px;height:26px;background:#1c2029;"></div>
<div class="a" style="left:1742px;top:242px;width:72px;height:26px;background:#20252f;"></div>
<div class="t" style="left:1728px;top:243.0px;height:26px;line-height:26px;color:#6c9a62;">y</div>
<div class="t" style="left:1746px;top:243.0px;height:26px;line-height:26px;">1</div>
<div class="a" style="left:1814px;top:242px;width:19px;height:26px;background:#1c2029;"></div>
<div class="a" style="left:1833px;top:242px;width:69px;height:26px;background:#20252f;"></div>
<div class="t" style="left:1819px;top:243.0px;height:26px;line-height:26px;color:#7a6aa8;">z</div>
<div class="t" style="left:1837px;top:243.0px;height:26px;line-height:26px;">0</div>
<div class="t" style="left:1633px;top:273.0px;height:26px;line-height:26px;">Cell Size</div>
<div class="a" style="left:1767px;top:272px;width:135px;height:26px;background:#20252f;"></div>
<div class="t" style="left:1782px;top:273.0px;height:26px;line-height:26px;">0.25</div>
<div class="t" style="left:1633px;top:303.0px;height:26px;line-height:26px;">Cell Height</div>
<div class="a" style="left:1767px;top:302px;width:135px;height:26px;background:#20252f;"></div>
<div class="t" style="left:1782px;top:303.0px;height:26px;line-height:26px;">0.25</div>
<div class="t" style="left:1633px;top:333.0px;height:26px;line-height:26px;">Edge Connection</div>
<div class="a" style="left:1767px;top:332px;width:135px;height:26px;background:#20252f;"></div>
<div class="t" style="left:1782px;top:333.0px;height:26px;line-height:26px;">0.25</div>
<div class="t" style="left:1633px;top:361.0px;height:26px;line-height:26px;">Navigation Layers</div>
<div class="a" style="left:1632px;top:385px;width:270px;height:52px;background:#1f242d;"></div>
<div class="a" style="left:1879px;top:385px;width:23px;height:52px;background:#262b36;"></div>
<div class="t" style="left:1883px;top:401.0px;height:20px;line-height:20px;font-size:13px;">...</div>
<div class="a" style="left:1636px;top:389px;width:20.5px;height:20.5px;background:#b9babe;"></div>
<div class="t" style="left:1646.25px;top:390.5px;height:20px;line-height:20px;color:#2b2f38;font-size:14px;transform:translateX(-50%)">1</div>
<div class="a" style="left:1658px;top:389px;width:20.5px;height:20.5px;background:#474b57;"></div>
<div class="t" style="left:1668.25px;top:390.5px;height:20px;line-height:20px;color:#8e9199;font-size:14px;transform:translateX(-50%)">2</div>
<div class="a" style="left:1680px;top:389px;width:20.5px;height:20.5px;background:#474b57;"></div>
<div class="t" style="left:1690.25px;top:390.5px;height:20px;line-height:20px;color:#8e9199;font-size:14px;transform:translateX(-50%)">3</div>
<div class="a" style="left:1702px;top:389px;width:20.5px;height:20.5px;background:#474b57;"></div>
<div class="t" style="left:1712.25px;top:390.5px;height:20px;line-height:20px;color:#8e9199;font-size:14px;transform:translateX(-50%)">4</div>
<div class="a" style="left:1728px;top:389px;width:20.5px;height:20.5px;background:#474b57;"></div>
<div class="t" style="left:1738.25px;top:390.5px;height:20px;line-height:20px;color:#8e9199;font-size:14px;transform:translateX(-50%)">9</div>
<div class="a" style="left:1750px;top:389px;width:20.5px;height:20.5px;background:#474b57;"></div>
<div class="t" style="left:1760.25px;top:390.5px;height:20px;line-height:20px;color:#8e9199;font-size:14px;transform:translateX(-50%)">10</div>
<div class="a" style="left:1772px;top:389px;width:20.5px;height:20.5px;background:#474b57;"></div>
<div class="t" style="left:1782.25px;top:390.5px;height:20px;line-height:20px;color:#8e9199;font-size:14px;transform:translateX(-50%)">11</div>
<div class="a" style="left:1794px;top:389px;width:20.5px;height:20.5px;background:#474b57;"></div>
<div class="t" style="left:1804.25px;top:390.5px;height:20px;line-height:20px;color:#8e9199;font-size:14px;transform:translateX(-50%)">12</div>
<div class="a" style="left:1636px;top:411px;width:20.5px;height:20.5px;background:#474b57;"></div>
<div class="t" style="left:1646.25px;top:412.5px;height:20px;line-height:20px;color:#8e9199;font-size:14px;transform:translateX(-50%)">5</div>
<div class="a" style="left:1658px;top:411px;width:20.5px;height:20.5px;background:#474b57;"></div>
<div class="t" style="left:1668.25px;top:412.5px;height:20px;line-height:20px;color:#8e9199;font-size:14px;transform:translateX(-50%)">6</div>
<div class="a" style="left:1680px;top:411px;width:20.5px;height:20.5px;background:#474b57;"></div>
<div class="t" style="left:1690.25px;top:412.5px;height:20px;line-height:20px;color:#8e9199;font-size:14px;transform:translateX(-50%)">7</div>
<div class="a" style="left:1702px;top:411px;width:20.5px;height:20.5px;background:#474b57;"></div>
<div class="t" style="left:1712.25px;top:412.5px;height:20px;line-height:20px;color:#8e9199;font-size:14px;transform:translateX(-50%)">8</div>
<div class="a" style="left:1728px;top:411px;width:20.5px;height:20.5px;background:#474b57;"></div>
<div class="t" style="left:1738.25px;top:412.5px;height:20px;line-height:20px;color:#8e9199;font-size:14px;transform:translateX(-50%)">13</div>
<div class="a" style="left:1750px;top:411px;width:20.5px;height:20.5px;background:#474b57;"></div>
<div class="t" style="left:1760.25px;top:412.5px;height:20px;line-height:20px;color:#8e9199;font-size:14px;transform:translateX(-50%)">14</div>
<div class="a" style="left:1772px;top:411px;width:20.5px;height:20.5px;background:#474b57;"></div>
<div class="t" style="left:1782.25px;top:412.5px;height:20px;line-height:20px;color:#8e9199;font-size:14px;transform:translateX(-50%)">15</div>
<div class="a" style="left:1794px;top:411px;width:20.5px;height:20.5px;background:#474b57;"></div>
<div class="t" style="left:1804.25px;top:412.5px;height:20px;line-height:20px;color:#8e9199;font-size:14px;transform:translateX(-50%)">16</div>
<svg style="left:1818px;top:422.5px" width="8" height="5" viewBox="0 0 8 5"><path d="M0.5 0.5 L4 4 L7.5 0.5" stroke="#6e7280" stroke-width="1.6" fill="none"/></svg>
<div class="a" style="left:1632px;top:438px;width:270px;height:22px;background:#3d4456;"></div>
<svg style="left:1736px;top:443px" width="12" height="12" viewBox="0 0 12 12"><circle cx="6" cy="6" r="5" stroke="#fc9c9c" stroke-width="2" fill="none"/></svg>
<div class="t" style="left:1754px;top:437.0px;height:26px;line-height:26px;">Spatial</div>
<svg style="left:1638.5px;top:467px" width="5" height="8" viewBox="0 0 5 8"><path d="M0.5 0.5 L4 4 L0.5 7.5" stroke="#8a8d96" stroke-width="1.6" fill="none"/></svg>
<div class="t" style="left:1651px;top:459.0px;height:26px;line-height:26px;">Transform</div>
<svg style="left:1638.5px;top:489px" width="5" height="8" viewBox="0 0 5 8"><path d="M0.5 0.5 L4 4 L0.5 7.5" stroke="#8a8d96" stroke-width="1.6" fill="none"/></svg>
<div class="t" style="left:1651px;top:481.0px;height:26px;line-height:26px;">Matrix</div>
<svg style="left:1638.5px;top:511px" width="5" height="8" viewBox="0 0 5 8"><path d="M0.5 0.5 L4 4 L0.5 7.5" stroke="#8a8d96" stroke-width="1.6" fill="none"/></svg>
<div class="t" style="left:1651px;top:503.0px;height:26px;line-height:26px;">Visibility</div>
<div class="a" style="left:1632px;top:526px;width:270px;height:22px;background:#3d4456;"></div>
<svg style="left:1741px;top:531px" width="12" height="12" viewBox="0 0 12 12"><circle cx="6" cy="6" r="5" stroke="#e0e0e0" stroke-width="2" fill="none"/></svg>
<div class="t" style="left:1759px;top:525.0px;height:26px;line-height:26px;">Node</div>
<div class="t" style="left:1633px;top:547.0px;height:26px;line-height:26px;">Editor Description</div>
<div class="a" style="left:1632px;top:570px;width:270px;height:108px;background:#272c3b;"></div>
<div class="a" style="left:1873px;top:570px;width:29px;height:108px;background:#21252f;"></div>
<svg style="left:1881px;top:617px" width="14" height="14" viewBox="0 0 14 14"><path d="M0 0 L5 0 L0 5Z M14 0 L9 0 L14 5Z M0 14 L5 14 L0 9Z M14 14 L9 14 L14 9Z" fill="#e0e0e0"/><path d="M1 1 L4.5 4.5 M13 1 L9.5 4.5 M1 13 L4.5 9.5 M13 13 L9.5 9.5" stroke="#e0e0e0" stroke-width="1.6"/></svg>
<div class="t" style="left:1633px;top:683.0px;height:26px;line-height:26px;">Pause Mode</div>
<div class="a" style="left:1767px;top:682px;width:135px;height:26px;background:#20252f;"></div>
<div class="t" style="left:1772px;top:683.0px;height:26px;line-height:26px;">Inherit</div>
<svg style="left:1887px;top:692.5px" width="8" height="5" viewBox="0 0 8 5"><path d="M0.5 0.5 L4 4 L7.5 0.5" stroke="#e0e0e0" stroke-width="1.6" fill="none"/></svg>
<div class="t" style="left:1633px;top:713.0px;height:26px;line-height:26px;">Physics Interpolati</div>
<div class="a" style="left:1767px;top:712px;width:135px;height:26px;background:#20252f;"></div>
<div class="t" style="left:1772px;top:713.0px;height:26px;line-height:26px;">Inherit</div>
<svg style="left:1887px;top:722.5px" width="8" height="5" viewBox="0 0 8 5"><path d="M0.5 0.5 L4 4 L7.5 0.5" stroke="#e0e0e0" stroke-width="1.6" fill="none"/></svg>
<div class="t" style="left:1633px;top:743.0px;height:26px;line-height:26px;">Process Priority</div>
<div class="a" style="left:1767px;top:742px;width:135px;height:26px;background:#20252f;"></div>
<div class="t" style="left:1782px;top:743.0px;height:26px;line-height:26px;">0</div>
<svg style="left:1883px;top:747px" width="10" height="16" viewBox="0 0 10 16"><path d="M1 6 L5 2 L9 6 M1 10 L5 14 L9 10" stroke="#e0e0e0" stroke-width="1.6" fill="none"/></svg>
<div class="t" style="left:1633px;top:773.0px;height:26px;line-height:26px;">Script</div>
<div class="a" style="left:1767px;top:772px;width:135px;height:26px;background:#20252f;border:1px solid #3b4150"></div>
<div class="t" style="left:1797px;top:773.0px;height:26px;line-height:26px;">[пусто]</div>
<svg style="left:1884px;top:783.5px" width="8" height="5" viewBox="0 0 8 5"><path d="M0.5 0.5 L4 4 L7.5 0.5" stroke="#e0e0e0" stroke-width="1.6" fill="none"/></svg>
</body></html>
